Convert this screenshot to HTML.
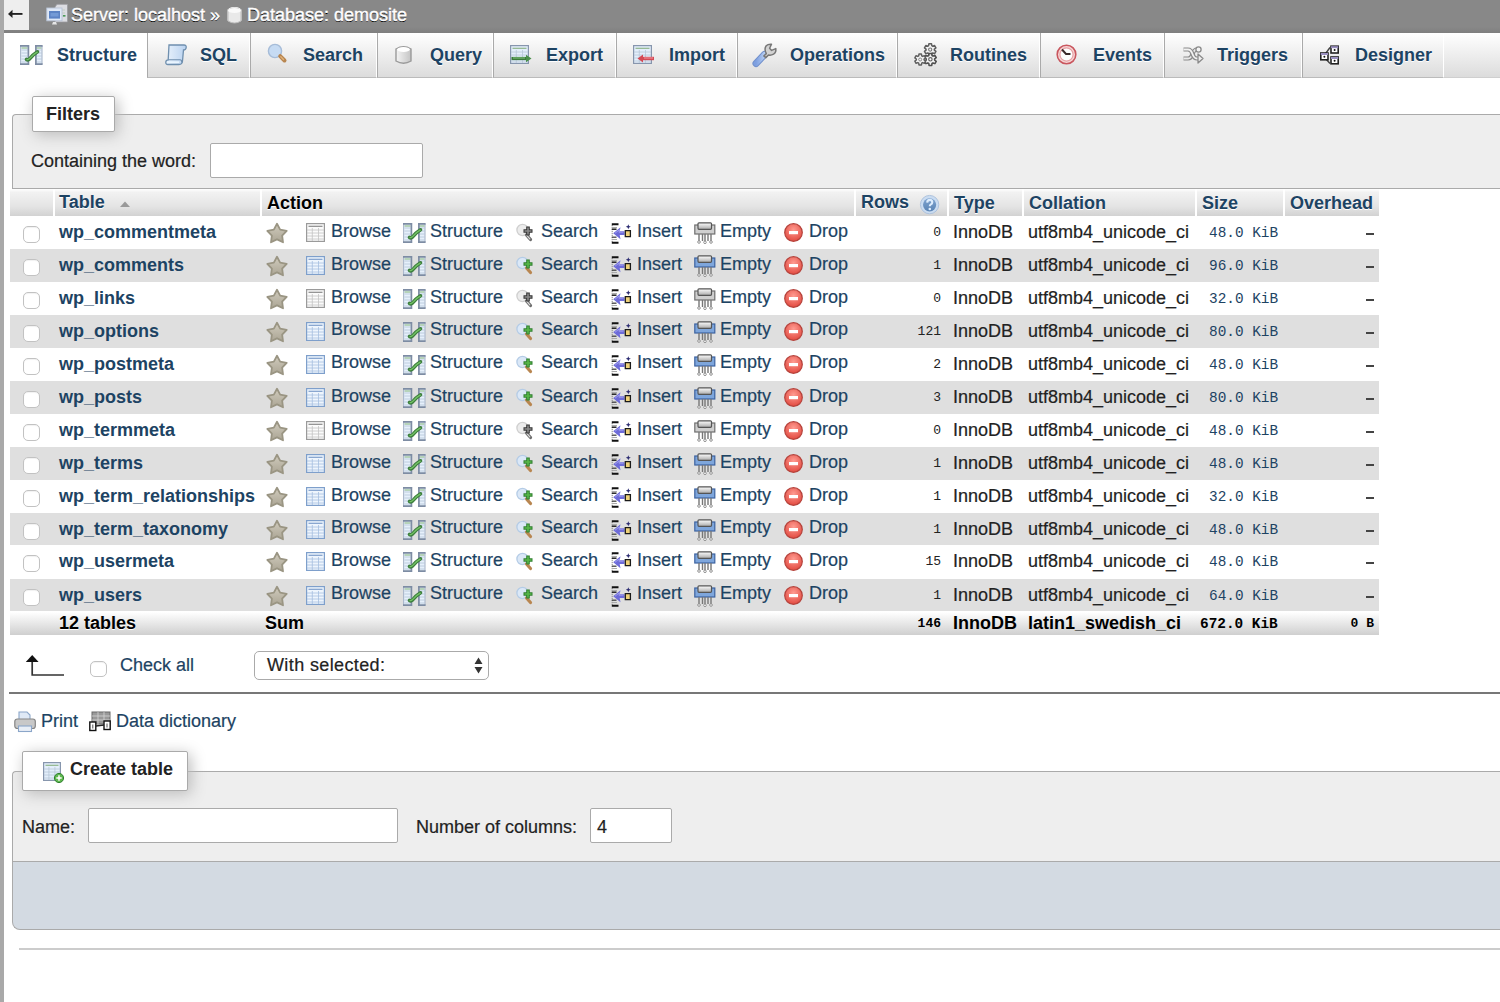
<!DOCTYPE html><html><head><meta charset='utf-8'><style>
*{box-sizing:border-box}
html,body{margin:0;padding:0;width:1500px;height:1002px;overflow:hidden;background:#fff;font-family:"Liberation Sans", sans-serif;font-size:18px;color:#000}
.a{position:absolute}
.t{position:absolute;white-space:nowrap;line-height:20px;height:20px;-webkit-text-stroke:0.2px currentColor}
.lk{color:#1d4363}
.b{font-weight:bold;-webkit-text-stroke:0}
svg{position:absolute;overflow:visible}
.tab{position:absolute;top:33px;height:45px;background:linear-gradient(#fff,#dcdcdc);border-left:1px solid #aaa;border-right:1px solid #fff;border-bottom:1px solid #bbb}
.tab .t{font-weight:bold;-webkit-text-stroke:0;color:#1d4363;text-shadow:0 1px 0 #fff}
.row{position:absolute;left:10px;width:1369px;height:33px}
.even{background:#dfdfdf}
.th{position:absolute;top:189px;height:27px;background:linear-gradient(#fff 0,#f2f2f2 12%,#e4e4e4 65%,#d2d2d2 100%)}
.th .t{font-weight:bold;-webkit-text-stroke:0;text-shadow:0 1px 0 #fff}
.num{font-family:"Liberation Mono", monospace;font-size:13px;-webkit-text-stroke:0}
.sz{font-family:"Liberation Mono", monospace;font-size:14.4px;color:#1d4363;-webkit-text-stroke:0}
.cb{position:absolute;width:17px;height:17px;border:1px solid #c2c2c2;border-radius:5px;background:#fff;box-shadow:inset 0 1px 1px rgba(0,0,0,0.06)}
</style></head><body>
<div class='a' style='left:0;top:0;width:4px;height:1002px;background:#a9a9a9'></div>
<div class='a' style='left:4px;top:0;width:1496px;height:33px;background:linear-gradient(#888 0,#888 27px,#7f7f7f 33px)'></div>
<div class='a' style='left:4px;top:0;width:25px;height:30px;background:#eee'></div>
<svg style='left:7px;top:9px' width='17' height='10' viewBox='0 0 17 10'><path d='M4 4.9 H15.5' stroke='#fff' stroke-width='3.4' opacity='0.6'/><path d='M4.5 4.9 H15.5' stroke='#222' stroke-width='1.9'/><path d='M1 4.9 L5.5 0.8 L5.5 9 Z' fill='#222'/></svg>
<svg style='left:46px;top:4px' width='22' height='22' viewBox='0 0 22 22'>
<path d='M9 3 L11 0.3 H21.5 V18 H9 Z' fill='#dcdde2' stroke='#9a9aa0' stroke-width='0.8'/>
<path d='M12 6h7M12 9h7M12 12h7' stroke='#b9c9b9' stroke-width='0.8'/>
<rect x='17' y='11' width='2.5' height='1.6' fill='#4a9a5a'/>
<rect x='0.8' y='4' width='15.2' height='12.8' fill='#dfe8f6' stroke='#b8c4d6' stroke-width='0.9'/>
<rect x='3' y='7' width='11' height='7.6' fill='#5b83c4'/>
<rect x='4.5' y='9' width='8' height='3.5' fill='#7ea4dd' opacity='0.7'/>
<path d='M6 20.5 L7 18 H10 L11 20.5 Z' fill='#e6e6e6'/>
</svg>
<svg style='left:227px;top:6px' width='15' height='18' viewBox='0 0 15 18'>
<defs><linearGradient id='dbg' x1='0' x2='1'><stop offset='0' stop-color='#f4f4f4'/><stop offset='0.5' stop-color='#dcdcdc'/><stop offset='1' stop-color='#bdbdbd'/></linearGradient></defs>
<path d='M0.5 3.5 Q7.5 -1 14.5 3.5 L14.5 14.5 Q7.5 19 0.5 14.5 Z' fill='#f7f7f7'/>
<path d='M2.5 5 Q7.5 7.5 12.5 5 L12.5 14 Q7.5 16.5 2.5 14 Z' fill='url(#dbg)'/>
<ellipse cx='7.5' cy='3.2' rx='6' ry='2.2' fill='#fff'/>
</svg>
<div class='t' style='left:71px;top:4.5px;color:#fff;text-shadow:0 1px 0 #000;-webkit-text-stroke:0.45px #fff'>Server: localhost &#187;</div>
<svg style='left:227px;top:7px' width='15' height='17' viewBox='0 0 15 17'>
<path d='M1 3 Q7.5 -1 14 3 L14 14 Q7.5 18 1 14 Z' fill='#e9e9e9' stroke='#bbb'/>
<ellipse cx='7.5' cy='3.5' rx='6.5' ry='2.5' fill='#fafafa'/>
</svg>
<div class='t' style='left:247px;top:4.5px;color:#fff;text-shadow:0 1px 0 #000;-webkit-text-stroke:0.45px #fff'>Database: demosite</div>
<div class='a' style='left:4px;top:33px;width:1496px;height:45px;background:linear-gradient(#fff,#dcdcdc);border-bottom:1px solid #cfcfcf'></div>
<div class='a' style='left:4px;top:33px;width:143px;height:45px;background:#fff'></div>
<div class='t b lk' style='left:57px;top:45px;text-shadow:0 1px 0 #fff'>Structure</div>
<svg style='left:20px;top:45px' width='23' height='20' viewBox='0 0 23 20'>
<rect x='0.5' y='0.5' width='8' height='19' fill='#e6f0fb'/>
<rect x='15.5' y='0.5' width='6.5' height='19' fill='#e6f0fb'/>
<path d='M1.5 5h6M1.5 8h6M1.5 11h6M1.5 14h6M1.5 17h6M16.5 5h5M16.5 8h5M16.5 11h5M16.5 14h5M16.5 17h5' stroke='#b9c8da' stroke-width='0.9'/>
<path d='M1.5 3h6M16.5 3h5' stroke='#86b57a' stroke-width='1.1'/>
<path d='M0.6 0.8 V19.2' stroke='#a9b7ca' stroke-width='1.1'/>
<path d='M22 0.8 V19.2' stroke='#a9b7ca' stroke-width='1.1'/>
<path d='M0 0.9 H9.3 M8.4 0.9 V19.2 M0 19.2 H9.3' stroke='#7d8ca3' stroke-width='1.7' fill='none'/>
<path d='M15 0.9 H22.6 M15.9 0.9 V19.2 M15 19.2 H22.6' stroke='#7d8ca3' stroke-width='1.7' fill='none'/>
<path d='M6.5 14.5 Q8 15.5 9.5 14 Q13 9.5 17.5 6.8' stroke='#3d7f3d' stroke-width='3.6' fill='none' stroke-linecap='round'/>
<path d='M7 14.6 Q8 15 9.5 13.6 Q13 9.4 17.2 7.2' stroke='#74c266' stroke-width='1.3' fill='none' stroke-linecap='round'/>
</svg>
<div class='tab' style='left:147px;width:103px'></div>
<div class='t b lk' style='left:200px;top:45px;text-shadow:0 1px 0 #fff'>SQL</div>
<svg style='left:165px;top:44px' width='22' height='22' viewBox='0 0 22 22'>
<defs><linearGradient id='sqlg' x1='0' x2='1'><stop offset='0' stop-color='#e9f2fc'/><stop offset='1' stop-color='#b9d2f0'/></linearGradient></defs>
<path d='M4 1 L19 1 Q21.5 1 21.2 3.5 Q21 6 18.5 6 L17.5 17 Q17.3 20.5 14 20.5 L3 20.5 Q0.5 20.5 0.8 18 Q1 15.8 3.2 15.8 L4 1 Z' fill='url(#sqlg)' stroke='#6f8fae' stroke-width='1.3'/>
<path d='M3.2 15.8 L15 15.8 Q17 16 16.8 18.5' fill='none' stroke='#6f8fae' stroke-width='1.1'/>
<path d='M2.5 18.2 L14 18.2' stroke='#eaf6ff' stroke-width='1.5'/>
</svg>
<div class='tab' style='left:250px;width:127px'></div>
<div class='t b lk' style='left:303px;top:45px;text-shadow:0 1px 0 #fff'>Search</div>
<svg style='left:267px;top:43px' width='20' height='20' viewBox='0 0 20 20'>
<circle cx='8' cy='8' r='6.6' fill='#c6dbf3' stroke='#a6bcd8' stroke-width='1.4'/>
<path d='M13.2 13.2 L17.5 17.5' stroke='#b88650' stroke-width='4' stroke-linecap='round'/>
<path d='M13.8 13.8 L16.5 16.5' stroke='#e0b27a' stroke-width='1.4' stroke-linecap='round'/>
</svg>
<div class='tab' style='left:377px;width:116px'></div>
<div class='t b lk' style='left:430px;top:45px;text-shadow:0 1px 0 #fff'>Query</div>
<svg style='left:395px;top:45px' width='17' height='20' viewBox='0 0 17 20'>
<defs><linearGradient id='qg' x1='0' x2='1'><stop offset='0' stop-color='#f4f4f4'/><stop offset='1' stop-color='#c4c4c4'/></linearGradient></defs>
<path d='M1 4 Q8.5 -0.5 16 4 L16 16 Q8.5 20.5 1 16 Z' fill='url(#qg)' stroke='#9a9a9a' stroke-width='1.4'/>
<ellipse cx='8.5' cy='4.5' rx='6.3' ry='2.4' fill='#fff'/>
</svg>
<div class='tab' style='left:493px;width:123px'></div>
<div class='t b lk' style='left:546px;top:45px;text-shadow:0 1px 0 #fff'>Export</div>
<svg style='left:510px;top:45px' width='22' height='19' viewBox='0 0 22 19'><rect x='0.6' y='0.6' width='17.8' height='17.8' fill='#e3eefb' stroke='#8796ad' stroke-width='1.2'/>
<path d='M2.5 3.3H16.5' stroke='#8fb48a' stroke-width='1.2'/>
<path d='M1 7H18M1 10H18M1 13H18M1 16H18M6.3 5V18M12.5 5V18' stroke='#b7c6d8' stroke-width='0.8'/>
<path d='M1.5 13.5 H17' stroke='#3b7a3b' stroke-width='3.2'/>
<path d='M16 9.8 L21.5 13.5 L16 17.2 Z' fill='#4a8f4a'/>
<path d='M3 13 H15' stroke='#8fcf8a' stroke-width='0.9'/>
</svg>
<div class='tab' style='left:616px;width:121px'></div>
<div class='t b lk' style='left:669px;top:45px;text-shadow:0 1px 0 #fff'>Import</div>
<svg style='left:633px;top:45px' width='22' height='19' viewBox='0 0 22 19'><rect x='0.6' y='0.6' width='17.8' height='17.8' fill='#e3eefb' stroke='#8796ad' stroke-width='1.2'/>
<path d='M2.5 3.3H16.5' stroke='#8fb48a' stroke-width='1.2'/>
<path d='M1 7H18M1 10H18M1 13H18M1 16H18M6.3 5V18M12.5 5V18' stroke='#b7c6d8' stroke-width='0.8'/>
<path d='M9 13.5 H21' stroke='#d44a55' stroke-width='3.4'/>
<path d='M10 9.5 L4.5 13.5 L10 17.5 Z' fill='#d44a55'/>
<path d='M11 13 H20' stroke='#f7a0a8' stroke-width='0.9'/>
</svg>
<div class='tab' style='left:737px;width:160px'></div>
<div class='t b lk' style='left:790px;top:45px;text-shadow:0 1px 0 #fff'>Operations</div>
<svg style='left:750px;top:40px' width='27' height='28' viewBox='0 0 27 28'>
<defs><linearGradient id='wg' x1='0' x2='1' y1='0' y2='0'><stop offset='0' stop-color='#7d9fe0'/><stop offset='1' stop-color='#b4ccf2'/></linearGradient></defs>
<path d='M6 23.5 L14.5 14.5' stroke='#7190cc' stroke-width='7' stroke-linecap='round'/>
<path d='M6 23.5 L14.5 14.5' stroke='url(#wg)' stroke-width='5' stroke-linecap='round'/>
<path d='M13.8 16 L16.3 13.6 Q13.8 9 16.2 5.8 Q18 4 21.5 4.3 L19.6 8.3 L21.6 10.4 L25.8 8.6 Q26.3 12.5 23.5 14.2 Q21 15.6 18.5 15 L15.8 17.6 Z' fill='#d2d2d2' stroke='#777' stroke-width='1.5' stroke-linejoin='round'/>
</svg>
<div class='tab' style='left:897px;width:143px'></div>
<div class='t b lk' style='left:950px;top:45px;text-shadow:0 1px 0 #fff'>Routines</div>
<svg style='left:910px;top:40px' width='30' height='30' viewBox='0 0 30 30'>
<path d='M18.59,5.72 L18.89,3.74 L21.51,3.74 L21.81,5.72 L22.76,6.27 L24.62,5.54 L25.93,7.81 L24.36,9.05 L24.36,10.15 L25.93,11.39 L24.62,13.66 L22.76,12.93 L21.81,13.48 L21.51,15.46 L18.89,15.46 L18.59,13.48 L17.64,12.93 L15.78,13.66 L14.47,11.39 L16.04,10.15 L16.04,9.05 L14.47,7.81 L15.78,5.54 L17.64,6.27 Z' fill='#f3f3f3' stroke='#5f5f5f' stroke-width='1.5' stroke-linejoin='round'/>
<circle cx='20.2' cy='9.6' r='1.6' fill='none' stroke='#777' stroke-width='1.1'/>
<path d='M18.77,15.56 L19.07,13.55 L21.73,13.55 L22.03,15.56 L23.00,16.11 L24.89,15.37 L26.22,17.68 L24.63,18.94 L24.63,20.06 L26.22,21.32 L24.89,23.63 L23.00,22.89 L22.03,23.44 L21.73,25.45 L19.07,25.45 L18.77,23.44 L17.80,22.89 L15.91,23.63 L14.58,21.32 L16.17,20.06 L16.17,18.94 L14.58,17.68 L15.91,15.37 L17.80,16.11 Z' fill='#f3f3f3' stroke='#4f4f4f' stroke-width='1.6' stroke-linejoin='round'/>
<circle cx='20.4' cy='19.3' r='1.7' fill='#fff' stroke='#666' stroke-width='1.2'/>
<path d='M8.70,15.88 L8.98,14.03 L11.42,14.03 L11.70,15.88 L12.59,16.39 L14.32,15.71 L15.54,17.83 L14.09,18.99 L14.09,20.01 L15.54,21.17 L14.32,23.29 L12.59,22.61 L11.70,23.12 L11.42,24.97 L8.98,24.97 L8.70,23.12 L7.81,22.61 L6.08,23.29 L4.86,21.17 L6.31,20.01 L6.31,18.99 L4.86,17.83 L6.08,15.71 L7.81,16.39 Z' fill='#f3f3f3' stroke='#5f5f5f' stroke-width='1.5' stroke-linejoin='round'/>
<circle cx='10.2' cy='19.5' r='1.5' fill='none' stroke='#888' stroke-width='1'/>
</svg>
<div class='tab' style='left:1040px;width:124px'></div>
<div class='t b lk' style='left:1093px;top:45px;text-shadow:0 1px 0 #fff'>Events</div>
<svg style='left:1056px;top:44px' width='21' height='21' viewBox='0 0 21 21'>
<circle cx='10.5' cy='10.5' r='9.3' fill='#f6d6d6' stroke='#c9565e' stroke-width='1.6'/>
<circle cx='10.5' cy='10.5' r='6.6' fill='#fdfdfd' stroke='#e6a0a4' stroke-width='1.2'/>
<path d='M6 5.5 L10 10 L14.5 10' stroke='#3a2a2a' stroke-width='1.9' fill='none'/>
</svg>
<div class='tab' style='left:1164px;width:138px'></div>
<div class='t b lk' style='left:1217px;top:45px;text-shadow:0 1px 0 #fff'>Triggers</div>
<svg style='left:1178px;top:40px' width='30' height='30' viewBox='0 0 30 30'>
<path d='M5.5 18.5 H10 Q13 18.5 14.5 14 Q16 9.5 19 9.5' stroke='#8a8a8a' stroke-width='4.2' fill='none'/>
<path d='M5.5 18.5 H10 Q13 18.5 14.5 14 Q16 9.5 19 9.5' stroke='#e9e9e9' stroke-width='1.8' fill='none'/>
<path d='M5.5 9.5 H10 Q13 9.5 14.5 14 Q16 18.5 19 18.5 H21' stroke='#8a8a8a' stroke-width='4.2' fill='none'/>
<path d='M5.5 9.5 H10 Q13 9.5 14.5 14 Q16 18.5 19 18.5 H21' stroke='#f2f2f2' stroke-width='1.8' fill='none'/>
<path d='M20 14 L25 18.5 L20 23 Z' fill='#eee' stroke='#8a8a8a' stroke-width='1.3' stroke-linejoin='round'/>
<circle cx='20.5' cy='9.5' r='2.6' fill='#f4f4f4' stroke='#8a8a8a' stroke-width='1.3'/>
</svg>
<div class='tab' style='left:1302px;width:142px'></div>
<div class='t b lk' style='left:1355px;top:45px;text-shadow:0 1px 0 #fff'>Designer</div>
<svg style='left:1320px;top:45px' width='19' height='20' viewBox='0 0 19 20'>
<path d='M4.5 10 L10 2.5 M5 13 L10 18.5' stroke='#444' stroke-width='1.4' fill='none'/>
<rect x='0.8' y='8' width='7.2' height='6.8' fill='#fff' stroke='#222' stroke-width='1.6'/>
<rect x='0.8' y='8' width='7.2' height='2' fill='#9a90c0'/>
<circle cx='4.4' cy='11.8' r='1' fill='#111'/>
<rect x='11' y='1.2' width='7.2' height='6.8' fill='#fff' stroke='#222' stroke-width='1.6'/>
<rect x='11' y='1.2' width='7.2' height='2' fill='#9a90c0'/>
<circle cx='14.6' cy='5' r='1' fill='#111'/>
<rect x='11' y='12' width='7.2' height='6.8' fill='#fff' stroke='#222' stroke-width='1.6'/>
<rect x='11' y='12' width='7.2' height='2' fill='#9a90c0'/>
<circle cx='14.6' cy='15.8' r='1' fill='#111'/>
</svg>
<div class='a' style='left:12px;top:114px;width:1500px;height:75px;background:#eee;border:1px solid #aaa;border-right:none;border-radius:4px 0 0 0'></div>
<div class='a' style='left:32px;top:96px;width:83px;height:36px;background:#fff;border:1px solid #aaa;border-radius:2px;box-shadow:3px 3px 15px #bbb'></div>
<div class='t b' style='left:46px;top:104px;color:#222'>Filters</div>
<div class='t' style='left:31px;top:151px;color:#222'>Containing the word:</div>
<div class='a' style='left:210px;top:143px;width:213px;height:35px;background:#fff;border:1px solid #aaa;border-radius:2px'></div>
<div class='th' style='left:10px;width:43px'></div>
<div class='th' style='left:55px;width:205px'></div>
<div class='th' style='left:262px;width:592px'></div>
<div class='th' style='left:856px;width:91px'></div>
<div class='th' style='left:949px;width:73px'></div>
<div class='th' style='left:1024px;width:171px'></div>
<div class='th' style='left:1197px;width:86px'></div>
<div class='th' style='left:1285px;width:94px'></div>
<div class='t b lk' style='left:59px;top:192px;text-shadow:0 1px 0 #fff'>Table</div>
<svg style='left:119px;top:200px' width='12' height='8'><path d='M1 7 L6 1.5 L11 7 Z' fill='#999'/></svg>
<div class='t b' style='left:267px;top:193px;text-shadow:0 1px 0 #fff'>Action</div>
<div class='t b lk' style='left:861px;top:192px;text-shadow:0 1px 0 #fff'>Rows</div>
<svg style='left:920px;top:195px' width='20' height='20' viewBox='0 0 20 20'>
<defs><linearGradient id='hg' x1='0' y1='0' x2='0' y2='1'><stop offset='0' stop-color='#7ea3cf'/><stop offset='1' stop-color='#5a84b5'/></linearGradient></defs>
<circle cx='9.6' cy='9.6' r='9.2' fill='#cadcf1' stroke='#a9bfdb' stroke-width='0.9'/>
<circle cx='9.6' cy='9.8' r='6.6' fill='url(#hg)'/>
<path d='M7.2 7.6 Q7.3 4.9 9.8 4.9 Q12.3 5 12.3 7.3 Q12.3 8.8 10.6 9.6 Q9.8 10 9.8 11.3' stroke='#dcecfd' stroke-width='2.1' fill='none'/>
<circle cx='9.8' cy='14' r='1.3' fill='#dcecfd'/>
</svg>
<div class='t b lk' style='left:954px;top:193px;text-shadow:0 1px 0 #fff'>Type</div>
<div class='t b lk' style='left:1029px;top:193px;text-shadow:0 1px 0 #fff'>Collation</div>
<div class='t b lk' style='left:1202px;top:193px;text-shadow:0 1px 0 #fff'>Size</div>
<div class='t b lk' style='left:1290px;top:193px;text-shadow:0 1px 0 #fff'>Overhead</div>
<div class='row' style='top:216.00px;height:33.30px'></div>
<div class='cb' style='left:23px;top:226.00px'></div>
<div class='t b lk' style='left:59px;top:222.00px'>wp_commentmeta</div>
<svg style='left:266px;top:222px' width='22' height='22' viewBox='0 0 22 22'>
<defs><linearGradient id='stg' x1='0' y1='0' x2='0' y2='1'><stop offset='0' stop-color='#d0cbbd'/><stop offset='1' stop-color='#aba594'/></linearGradient></defs>
<path d='M11.00,1.80 L14.17,7.63 L20.70,8.85 L16.14,13.67 L17.00,20.25 L11.00,17.40 L5.00,20.25 L5.86,13.67 L1.30,8.85 L7.83,7.63 Z' fill='url(#stg)' stroke='#9a9583' stroke-width='1.8' stroke-linejoin='round'/>
</svg><svg style='left:306px;top:223px' width='19' height='19' viewBox='0 0 19 19'><rect x='0.6' y='0.6' width='17.8' height='17.8' fill='#fbfbfb' stroke='#9a9a9a' stroke-width='1.2'/>
<path d='M2.5 3.3H16.5' stroke='#8a8a8a' stroke-width='1.2'/>
<path d='M1 7H18M1 10H18M1 13H18M1 16H18M6.3 5V18M12.5 5V18' stroke='#c4c4c4' stroke-width='0.8'/></svg><svg style='left:403px;top:223px' width='23' height='20' viewBox='0 0 23 20'>
<rect x='0.5' y='0.5' width='8' height='19' fill='#e6f0fb'/>
<rect x='15.5' y='0.5' width='6.5' height='19' fill='#e6f0fb'/>
<path d='M1.5 5h6M1.5 8h6M1.5 11h6M1.5 14h6M1.5 17h6M16.5 5h5M16.5 8h5M16.5 11h5M16.5 14h5M16.5 17h5' stroke='#b9c8da' stroke-width='0.9'/>
<path d='M1.5 3h6M16.5 3h5' stroke='#86b57a' stroke-width='1.1'/>
<path d='M0.6 0.8 V19.2' stroke='#a9b7ca' stroke-width='1.1'/>
<path d='M22 0.8 V19.2' stroke='#a9b7ca' stroke-width='1.1'/>
<path d='M0 0.9 H9.3 M8.4 0.9 V19.2 M0 19.2 H9.3' stroke='#7d8ca3' stroke-width='1.7' fill='none'/>
<path d='M15 0.9 H22.6 M15.9 0.9 V19.2 M15 19.2 H22.6' stroke='#7d8ca3' stroke-width='1.7' fill='none'/>
<path d='M6.5 14.5 Q8 15.5 9.5 14 Q13 9.5 17.5 6.8' stroke='#3d7f3d' stroke-width='3.6' fill='none' stroke-linecap='round'/>
<path d='M7 14.6 Q8 15 9.5 13.6 Q13 9.4 17.2 7.2' stroke='#74c266' stroke-width='1.3' fill='none' stroke-linecap='round'/>
</svg><svg style='left:516px;top:223px' width='18' height='18' viewBox='0 0 18 18'>
<circle cx='6.5' cy='7' r='5.6' fill='#ececec' stroke='#cfcfcf' stroke-width='1.3'/>
<path d='M10.5 12 L14.5 16.5' stroke='#6a6a6a' stroke-width='3.2' stroke-linecap='round'/>
<path d='M10.8 12.3 L13.8 15.8' stroke='#ddd' stroke-width='1.2' stroke-linecap='round'/>
<path d='M12 3.5 V12.5 M7.5 8 H16.5' stroke='#333' stroke-width='3.6'/>
<path d='M12 4.5 V11.5 M8.5 8 H15.5' stroke='#8a8a8a' stroke-width='1.6'/>
</svg><svg style='left:611px;top:223px' width='20' height='21' viewBox='0 0 20 21'>
<path d='M1.2 2 V19' stroke='#888' stroke-width='1' stroke-dasharray='1.2 0.8'/>
<path d='M0.8 1.2 H7.5 M0.8 19.8 H7.5' stroke='#111' stroke-width='2'/>
<path d='M1.8 4.5 H6 M1.8 16.5 H6' stroke='#aaa' stroke-width='1.1'/>
<path d='M0.8 6.2 H5.5' stroke='#222' stroke-width='1.5'/>
<path d='M0.8 14.2 H5.5' stroke='#444' stroke-width='1.3'/>
<path d='M2.2 10.2 L9.5 4.2 L8.7 8.3 L13.5 8.3 L13.5 12.1 L8.7 12.1 L9.5 16.2 Z' fill='#6d6bd9'/>
<path d='M4 10.2 L8.5 6.8 L8 9.2 L12.5 9.2' stroke='#a9a8f0' stroke-width='0.8' fill='none'/>
<path d='M14.3 7.6 H19.4 V13.6 H14.3 Z' fill='#efd27a' stroke='#1a1a1a' stroke-width='1.3'/>
<path d='M17.3 1.2 L18 3 L19.8 3.7 L18 4.4 L17.3 6.2 L16.6 4.4 L14.8 3.7 L16.6 3 Z' fill='#2a2a70'/>
</svg><svg style='left:694px;top:222px' width='22' height='22' viewBox='0 0 22 22'>
<defs><linearGradient id='emg0' x1='0' y1='0' x2='0' y2='1'><stop offset='0' stop-color='#fff'/><stop offset='1' stop-color='#aaa'/></linearGradient></defs>
<rect x='0.8' y='3' width='20' height='9' fill='#cfcfcf' stroke='#6f6f6f' stroke-width='1.2'/>
<rect x='4' y='0.8' width='13.5' height='6.5' rx='1' fill='url(#emg0)' stroke='#555' stroke-width='1.2'/>
<path d='M5 12 V20 M8.5 12 V19 M11 12 V20 M14 12 V19 M17 12 V20' stroke='#777' stroke-width='1.4'/>
<circle cx='5' cy='20' r='1.3' fill='#fff' stroke='#888' stroke-width='0.9'/>
<circle cx='11' cy='20.3' r='1.3' fill='#fff' stroke='#888' stroke-width='0.9'/>
<circle cx='17' cy='20' r='1.3' fill='#fff' stroke='#888' stroke-width='0.9'/>
</svg><svg style='left:784px;top:223px' width='19' height='19' viewBox='0 0 19 19'>
<defs><radialGradient id='drg' cx='0.5' cy='0.35' r='0.7'><stop offset='0' stop-color='#ff9c92'/><stop offset='1' stop-color='#e0443a'/></radialGradient></defs>
<circle cx='9.5' cy='9.5' r='8.8' fill='url(#drg)' stroke='#b5433c' stroke-width='1.2'/>
<rect x='5' y='8' width='9' height='3.2' fill='#fff'/>
</svg>
<div class='t lk' style='left:331px;top:220.60px'>Browse</div>
<div class='t lk' style='left:430px;top:220.60px'>Structure</div>
<div class='t lk' style='left:541px;top:220.60px'>Search</div>
<div class='t lk' style='left:637px;top:220.60px'>Insert</div>
<div class='t lk' style='left:720px;top:220.60px'>Empty</div>
<div class='t lk' style='left:809px;top:220.60px'>Drop</div>
<div class='t num' style='left:856px;width:85px;text-align:right;top:223.00px;color:#222'>0</div>
<div class='t' style='left:953px;top:222.00px;color:#222'>InnoDB</div>
<div class='t' style='left:1028px;top:222.00px;color:#222'>utf8mb4_unicode_ci</div>
<div class='t sz' style='left:1209px;top:223.00px'>48.0 KiB</div>
<div class='a' style='left:1366px;top:233px;width:8px;height:2px;background:#444'></div>
<div class='row even' style='top:249.30px;height:32.70px'></div>
<div class='cb' style='left:23px;top:259.30px'></div>
<div class='t b lk' style='left:59px;top:255.30px'>wp_comments</div>
<svg style='left:266px;top:255px' width='22' height='22' viewBox='0 0 22 22'>
<defs><linearGradient id='stg' x1='0' y1='0' x2='0' y2='1'><stop offset='0' stop-color='#d0cbbd'/><stop offset='1' stop-color='#aba594'/></linearGradient></defs>
<path d='M11.00,1.80 L14.17,7.63 L20.70,8.85 L16.14,13.67 L17.00,20.25 L11.00,17.40 L5.00,20.25 L5.86,13.67 L1.30,8.85 L7.83,7.63 Z' fill='url(#stg)' stroke='#9a9583' stroke-width='1.8' stroke-linejoin='round'/>
</svg><svg style='left:306px;top:256px' width='19' height='19' viewBox='0 0 19 19'><rect x='0.6' y='0.6' width='17.8' height='17.8' fill='#eef5fd' stroke='#7e9fcb' stroke-width='1.2'/>
<path d='M2.5 3.3H16.5' stroke='#7e9fcb' stroke-width='1.2'/>
<path d='M1 7H18M1 10H18M1 13H18M1 16H18M6.3 5V18M12.5 5V18' stroke='#a6bfdf' stroke-width='0.8'/></svg><svg style='left:403px;top:256px' width='23' height='20' viewBox='0 0 23 20'>
<rect x='0.5' y='0.5' width='8' height='19' fill='#e6f0fb'/>
<rect x='15.5' y='0.5' width='6.5' height='19' fill='#e6f0fb'/>
<path d='M1.5 5h6M1.5 8h6M1.5 11h6M1.5 14h6M1.5 17h6M16.5 5h5M16.5 8h5M16.5 11h5M16.5 14h5M16.5 17h5' stroke='#b9c8da' stroke-width='0.9'/>
<path d='M1.5 3h6M16.5 3h5' stroke='#86b57a' stroke-width='1.1'/>
<path d='M0.6 0.8 V19.2' stroke='#a9b7ca' stroke-width='1.1'/>
<path d='M22 0.8 V19.2' stroke='#a9b7ca' stroke-width='1.1'/>
<path d='M0 0.9 H9.3 M8.4 0.9 V19.2 M0 19.2 H9.3' stroke='#7d8ca3' stroke-width='1.7' fill='none'/>
<path d='M15 0.9 H22.6 M15.9 0.9 V19.2 M15 19.2 H22.6' stroke='#7d8ca3' stroke-width='1.7' fill='none'/>
<path d='M6.5 14.5 Q8 15.5 9.5 14 Q13 9.5 17.5 6.8' stroke='#3d7f3d' stroke-width='3.6' fill='none' stroke-linecap='round'/>
<path d='M7 14.6 Q8 15 9.5 13.6 Q13 9.4 17.2 7.2' stroke='#74c266' stroke-width='1.3' fill='none' stroke-linecap='round'/>
</svg><svg style='left:516px;top:256px' width='18' height='18' viewBox='0 0 18 18'>
<circle cx='6.5' cy='7' r='5.6' fill='#dbe8f7' stroke='#b5cce6' stroke-width='1.3'/>
<path d='M10.5 12 L14.5 16.5' stroke='#b88650' stroke-width='3.2' stroke-linecap='round'/>
<path d='M12 3.5 V12.5 M7.5 8 H16.5' stroke='#2f7f2f' stroke-width='3.6'/>
<path d='M12 4.5 V11.5 M8.5 8 H15.5' stroke='#58b84a' stroke-width='1.6'/>
</svg><svg style='left:611px;top:256px' width='20' height='21' viewBox='0 0 20 21'>
<path d='M1.2 2 V19' stroke='#888' stroke-width='1' stroke-dasharray='1.2 0.8'/>
<path d='M0.8 1.2 H7.5 M0.8 19.8 H7.5' stroke='#111' stroke-width='2'/>
<path d='M1.8 4.5 H6 M1.8 16.5 H6' stroke='#aaa' stroke-width='1.1'/>
<path d='M0.8 6.2 H5.5' stroke='#222' stroke-width='1.5'/>
<path d='M0.8 14.2 H5.5' stroke='#444' stroke-width='1.3'/>
<path d='M2.2 10.2 L9.5 4.2 L8.7 8.3 L13.5 8.3 L13.5 12.1 L8.7 12.1 L9.5 16.2 Z' fill='#6d6bd9'/>
<path d='M4 10.2 L8.5 6.8 L8 9.2 L12.5 9.2' stroke='#a9a8f0' stroke-width='0.8' fill='none'/>
<path d='M14.3 7.6 H19.4 V13.6 H14.3 Z' fill='#efd27a' stroke='#1a1a1a' stroke-width='1.3'/>
<path d='M17.3 1.2 L18 3 L19.8 3.7 L18 4.4 L17.3 6.2 L16.6 4.4 L14.8 3.7 L16.6 3 Z' fill='#2a2a70'/>
</svg><svg style='left:694px;top:255px' width='22' height='22' viewBox='0 0 22 22'>
<defs><linearGradient id='emg1' x1='0' y1='0' x2='0' y2='1'><stop offset='0' stop-color='#fff'/><stop offset='1' stop-color='#aaa'/></linearGradient></defs>
<rect x='0.8' y='3' width='20' height='9' fill='#7ea6dc' stroke='#3d63a0' stroke-width='1.2'/>
<rect x='4' y='0.8' width='13.5' height='6.5' rx='1' fill='url(#emg1)' stroke='#555' stroke-width='1.2'/>
<path d='M5 12 V20 M8.5 12 V19 M11 12 V20 M14 12 V19 M17 12 V20' stroke='#777' stroke-width='1.4'/>
<circle cx='5' cy='20' r='1.3' fill='#fff' stroke='#888' stroke-width='0.9'/>
<circle cx='11' cy='20.3' r='1.3' fill='#fff' stroke='#888' stroke-width='0.9'/>
<circle cx='17' cy='20' r='1.3' fill='#fff' stroke='#888' stroke-width='0.9'/>
</svg><svg style='left:784px;top:256px' width='19' height='19' viewBox='0 0 19 19'>
<defs><radialGradient id='drg' cx='0.5' cy='0.35' r='0.7'><stop offset='0' stop-color='#ff9c92'/><stop offset='1' stop-color='#e0443a'/></radialGradient></defs>
<circle cx='9.5' cy='9.5' r='8.8' fill='url(#drg)' stroke='#b5433c' stroke-width='1.2'/>
<rect x='5' y='8' width='9' height='3.2' fill='#fff'/>
</svg>
<div class='t lk' style='left:331px;top:253.90px'>Browse</div>
<div class='t lk' style='left:430px;top:253.90px'>Structure</div>
<div class='t lk' style='left:541px;top:253.90px'>Search</div>
<div class='t lk' style='left:637px;top:253.90px'>Insert</div>
<div class='t lk' style='left:720px;top:253.90px'>Empty</div>
<div class='t lk' style='left:809px;top:253.90px'>Drop</div>
<div class='t num' style='left:856px;width:85px;text-align:right;top:256.30px;color:#222'>1</div>
<div class='t' style='left:953px;top:255.30px;color:#222'>InnoDB</div>
<div class='t' style='left:1028px;top:255.30px;color:#222'>utf8mb4_unicode_ci</div>
<div class='t sz' style='left:1209px;top:256.30px'>96.0 KiB</div>
<div class='a' style='left:1366px;top:266px;width:8px;height:2px;background:#444'></div>
<div class='row' style='top:282.00px;height:32.80px'></div>
<div class='cb' style='left:23px;top:292.00px'></div>
<div class='t b lk' style='left:59px;top:288.00px'>wp_links</div>
<svg style='left:266px;top:288px' width='22' height='22' viewBox='0 0 22 22'>
<defs><linearGradient id='stg' x1='0' y1='0' x2='0' y2='1'><stop offset='0' stop-color='#d0cbbd'/><stop offset='1' stop-color='#aba594'/></linearGradient></defs>
<path d='M11.00,1.80 L14.17,7.63 L20.70,8.85 L16.14,13.67 L17.00,20.25 L11.00,17.40 L5.00,20.25 L5.86,13.67 L1.30,8.85 L7.83,7.63 Z' fill='url(#stg)' stroke='#9a9583' stroke-width='1.8' stroke-linejoin='round'/>
</svg><svg style='left:306px;top:289px' width='19' height='19' viewBox='0 0 19 19'><rect x='0.6' y='0.6' width='17.8' height='17.8' fill='#fbfbfb' stroke='#9a9a9a' stroke-width='1.2'/>
<path d='M2.5 3.3H16.5' stroke='#8a8a8a' stroke-width='1.2'/>
<path d='M1 7H18M1 10H18M1 13H18M1 16H18M6.3 5V18M12.5 5V18' stroke='#c4c4c4' stroke-width='0.8'/></svg><svg style='left:403px;top:289px' width='23' height='20' viewBox='0 0 23 20'>
<rect x='0.5' y='0.5' width='8' height='19' fill='#e6f0fb'/>
<rect x='15.5' y='0.5' width='6.5' height='19' fill='#e6f0fb'/>
<path d='M1.5 5h6M1.5 8h6M1.5 11h6M1.5 14h6M1.5 17h6M16.5 5h5M16.5 8h5M16.5 11h5M16.5 14h5M16.5 17h5' stroke='#b9c8da' stroke-width='0.9'/>
<path d='M1.5 3h6M16.5 3h5' stroke='#86b57a' stroke-width='1.1'/>
<path d='M0.6 0.8 V19.2' stroke='#a9b7ca' stroke-width='1.1'/>
<path d='M22 0.8 V19.2' stroke='#a9b7ca' stroke-width='1.1'/>
<path d='M0 0.9 H9.3 M8.4 0.9 V19.2 M0 19.2 H9.3' stroke='#7d8ca3' stroke-width='1.7' fill='none'/>
<path d='M15 0.9 H22.6 M15.9 0.9 V19.2 M15 19.2 H22.6' stroke='#7d8ca3' stroke-width='1.7' fill='none'/>
<path d='M6.5 14.5 Q8 15.5 9.5 14 Q13 9.5 17.5 6.8' stroke='#3d7f3d' stroke-width='3.6' fill='none' stroke-linecap='round'/>
<path d='M7 14.6 Q8 15 9.5 13.6 Q13 9.4 17.2 7.2' stroke='#74c266' stroke-width='1.3' fill='none' stroke-linecap='round'/>
</svg><svg style='left:516px;top:289px' width='18' height='18' viewBox='0 0 18 18'>
<circle cx='6.5' cy='7' r='5.6' fill='#ececec' stroke='#cfcfcf' stroke-width='1.3'/>
<path d='M10.5 12 L14.5 16.5' stroke='#6a6a6a' stroke-width='3.2' stroke-linecap='round'/>
<path d='M10.8 12.3 L13.8 15.8' stroke='#ddd' stroke-width='1.2' stroke-linecap='round'/>
<path d='M12 3.5 V12.5 M7.5 8 H16.5' stroke='#333' stroke-width='3.6'/>
<path d='M12 4.5 V11.5 M8.5 8 H15.5' stroke='#8a8a8a' stroke-width='1.6'/>
</svg><svg style='left:611px;top:289px' width='20' height='21' viewBox='0 0 20 21'>
<path d='M1.2 2 V19' stroke='#888' stroke-width='1' stroke-dasharray='1.2 0.8'/>
<path d='M0.8 1.2 H7.5 M0.8 19.8 H7.5' stroke='#111' stroke-width='2'/>
<path d='M1.8 4.5 H6 M1.8 16.5 H6' stroke='#aaa' stroke-width='1.1'/>
<path d='M0.8 6.2 H5.5' stroke='#222' stroke-width='1.5'/>
<path d='M0.8 14.2 H5.5' stroke='#444' stroke-width='1.3'/>
<path d='M2.2 10.2 L9.5 4.2 L8.7 8.3 L13.5 8.3 L13.5 12.1 L8.7 12.1 L9.5 16.2 Z' fill='#6d6bd9'/>
<path d='M4 10.2 L8.5 6.8 L8 9.2 L12.5 9.2' stroke='#a9a8f0' stroke-width='0.8' fill='none'/>
<path d='M14.3 7.6 H19.4 V13.6 H14.3 Z' fill='#efd27a' stroke='#1a1a1a' stroke-width='1.3'/>
<path d='M17.3 1.2 L18 3 L19.8 3.7 L18 4.4 L17.3 6.2 L16.6 4.4 L14.8 3.7 L16.6 3 Z' fill='#2a2a70'/>
</svg><svg style='left:694px;top:288px' width='22' height='22' viewBox='0 0 22 22'>
<defs><linearGradient id='emg0' x1='0' y1='0' x2='0' y2='1'><stop offset='0' stop-color='#fff'/><stop offset='1' stop-color='#aaa'/></linearGradient></defs>
<rect x='0.8' y='3' width='20' height='9' fill='#cfcfcf' stroke='#6f6f6f' stroke-width='1.2'/>
<rect x='4' y='0.8' width='13.5' height='6.5' rx='1' fill='url(#emg0)' stroke='#555' stroke-width='1.2'/>
<path d='M5 12 V20 M8.5 12 V19 M11 12 V20 M14 12 V19 M17 12 V20' stroke='#777' stroke-width='1.4'/>
<circle cx='5' cy='20' r='1.3' fill='#fff' stroke='#888' stroke-width='0.9'/>
<circle cx='11' cy='20.3' r='1.3' fill='#fff' stroke='#888' stroke-width='0.9'/>
<circle cx='17' cy='20' r='1.3' fill='#fff' stroke='#888' stroke-width='0.9'/>
</svg><svg style='left:784px;top:289px' width='19' height='19' viewBox='0 0 19 19'>
<defs><radialGradient id='drg' cx='0.5' cy='0.35' r='0.7'><stop offset='0' stop-color='#ff9c92'/><stop offset='1' stop-color='#e0443a'/></radialGradient></defs>
<circle cx='9.5' cy='9.5' r='8.8' fill='url(#drg)' stroke='#b5433c' stroke-width='1.2'/>
<rect x='5' y='8' width='9' height='3.2' fill='#fff'/>
</svg>
<div class='t lk' style='left:331px;top:286.60px'>Browse</div>
<div class='t lk' style='left:430px;top:286.60px'>Structure</div>
<div class='t lk' style='left:541px;top:286.60px'>Search</div>
<div class='t lk' style='left:637px;top:286.60px'>Insert</div>
<div class='t lk' style='left:720px;top:286.60px'>Empty</div>
<div class='t lk' style='left:809px;top:286.60px'>Drop</div>
<div class='t num' style='left:856px;width:85px;text-align:right;top:289.00px;color:#222'>0</div>
<div class='t' style='left:953px;top:288.00px;color:#222'>InnoDB</div>
<div class='t' style='left:1028px;top:288.00px;color:#222'>utf8mb4_unicode_ci</div>
<div class='t sz' style='left:1209px;top:289.00px'>32.0 KiB</div>
<div class='a' style='left:1366px;top:299px;width:8px;height:2px;background:#444'></div>
<div class='row even' style='top:314.80px;height:33.00px'></div>
<div class='cb' style='left:23px;top:324.80px'></div>
<div class='t b lk' style='left:59px;top:320.80px'>wp_options</div>
<svg style='left:266px;top:321px' width='22' height='22' viewBox='0 0 22 22'>
<defs><linearGradient id='stg' x1='0' y1='0' x2='0' y2='1'><stop offset='0' stop-color='#d0cbbd'/><stop offset='1' stop-color='#aba594'/></linearGradient></defs>
<path d='M11.00,1.80 L14.17,7.63 L20.70,8.85 L16.14,13.67 L17.00,20.25 L11.00,17.40 L5.00,20.25 L5.86,13.67 L1.30,8.85 L7.83,7.63 Z' fill='url(#stg)' stroke='#9a9583' stroke-width='1.8' stroke-linejoin='round'/>
</svg><svg style='left:306px;top:322px' width='19' height='19' viewBox='0 0 19 19'><rect x='0.6' y='0.6' width='17.8' height='17.8' fill='#eef5fd' stroke='#7e9fcb' stroke-width='1.2'/>
<path d='M2.5 3.3H16.5' stroke='#7e9fcb' stroke-width='1.2'/>
<path d='M1 7H18M1 10H18M1 13H18M1 16H18M6.3 5V18M12.5 5V18' stroke='#a6bfdf' stroke-width='0.8'/></svg><svg style='left:403px;top:322px' width='23' height='20' viewBox='0 0 23 20'>
<rect x='0.5' y='0.5' width='8' height='19' fill='#e6f0fb'/>
<rect x='15.5' y='0.5' width='6.5' height='19' fill='#e6f0fb'/>
<path d='M1.5 5h6M1.5 8h6M1.5 11h6M1.5 14h6M1.5 17h6M16.5 5h5M16.5 8h5M16.5 11h5M16.5 14h5M16.5 17h5' stroke='#b9c8da' stroke-width='0.9'/>
<path d='M1.5 3h6M16.5 3h5' stroke='#86b57a' stroke-width='1.1'/>
<path d='M0.6 0.8 V19.2' stroke='#a9b7ca' stroke-width='1.1'/>
<path d='M22 0.8 V19.2' stroke='#a9b7ca' stroke-width='1.1'/>
<path d='M0 0.9 H9.3 M8.4 0.9 V19.2 M0 19.2 H9.3' stroke='#7d8ca3' stroke-width='1.7' fill='none'/>
<path d='M15 0.9 H22.6 M15.9 0.9 V19.2 M15 19.2 H22.6' stroke='#7d8ca3' stroke-width='1.7' fill='none'/>
<path d='M6.5 14.5 Q8 15.5 9.5 14 Q13 9.5 17.5 6.8' stroke='#3d7f3d' stroke-width='3.6' fill='none' stroke-linecap='round'/>
<path d='M7 14.6 Q8 15 9.5 13.6 Q13 9.4 17.2 7.2' stroke='#74c266' stroke-width='1.3' fill='none' stroke-linecap='round'/>
</svg><svg style='left:516px;top:322px' width='18' height='18' viewBox='0 0 18 18'>
<circle cx='6.5' cy='7' r='5.6' fill='#dbe8f7' stroke='#b5cce6' stroke-width='1.3'/>
<path d='M10.5 12 L14.5 16.5' stroke='#b88650' stroke-width='3.2' stroke-linecap='round'/>
<path d='M12 3.5 V12.5 M7.5 8 H16.5' stroke='#2f7f2f' stroke-width='3.6'/>
<path d='M12 4.5 V11.5 M8.5 8 H15.5' stroke='#58b84a' stroke-width='1.6'/>
</svg><svg style='left:611px;top:322px' width='20' height='21' viewBox='0 0 20 21'>
<path d='M1.2 2 V19' stroke='#888' stroke-width='1' stroke-dasharray='1.2 0.8'/>
<path d='M0.8 1.2 H7.5 M0.8 19.8 H7.5' stroke='#111' stroke-width='2'/>
<path d='M1.8 4.5 H6 M1.8 16.5 H6' stroke='#aaa' stroke-width='1.1'/>
<path d='M0.8 6.2 H5.5' stroke='#222' stroke-width='1.5'/>
<path d='M0.8 14.2 H5.5' stroke='#444' stroke-width='1.3'/>
<path d='M2.2 10.2 L9.5 4.2 L8.7 8.3 L13.5 8.3 L13.5 12.1 L8.7 12.1 L9.5 16.2 Z' fill='#6d6bd9'/>
<path d='M4 10.2 L8.5 6.8 L8 9.2 L12.5 9.2' stroke='#a9a8f0' stroke-width='0.8' fill='none'/>
<path d='M14.3 7.6 H19.4 V13.6 H14.3 Z' fill='#efd27a' stroke='#1a1a1a' stroke-width='1.3'/>
<path d='M17.3 1.2 L18 3 L19.8 3.7 L18 4.4 L17.3 6.2 L16.6 4.4 L14.8 3.7 L16.6 3 Z' fill='#2a2a70'/>
</svg><svg style='left:694px;top:321px' width='22' height='22' viewBox='0 0 22 22'>
<defs><linearGradient id='emg1' x1='0' y1='0' x2='0' y2='1'><stop offset='0' stop-color='#fff'/><stop offset='1' stop-color='#aaa'/></linearGradient></defs>
<rect x='0.8' y='3' width='20' height='9' fill='#7ea6dc' stroke='#3d63a0' stroke-width='1.2'/>
<rect x='4' y='0.8' width='13.5' height='6.5' rx='1' fill='url(#emg1)' stroke='#555' stroke-width='1.2'/>
<path d='M5 12 V20 M8.5 12 V19 M11 12 V20 M14 12 V19 M17 12 V20' stroke='#777' stroke-width='1.4'/>
<circle cx='5' cy='20' r='1.3' fill='#fff' stroke='#888' stroke-width='0.9'/>
<circle cx='11' cy='20.3' r='1.3' fill='#fff' stroke='#888' stroke-width='0.9'/>
<circle cx='17' cy='20' r='1.3' fill='#fff' stroke='#888' stroke-width='0.9'/>
</svg><svg style='left:784px;top:322px' width='19' height='19' viewBox='0 0 19 19'>
<defs><radialGradient id='drg' cx='0.5' cy='0.35' r='0.7'><stop offset='0' stop-color='#ff9c92'/><stop offset='1' stop-color='#e0443a'/></radialGradient></defs>
<circle cx='9.5' cy='9.5' r='8.8' fill='url(#drg)' stroke='#b5433c' stroke-width='1.2'/>
<rect x='5' y='8' width='9' height='3.2' fill='#fff'/>
</svg>
<div class='t lk' style='left:331px;top:319.40px'>Browse</div>
<div class='t lk' style='left:430px;top:319.40px'>Structure</div>
<div class='t lk' style='left:541px;top:319.40px'>Search</div>
<div class='t lk' style='left:637px;top:319.40px'>Insert</div>
<div class='t lk' style='left:720px;top:319.40px'>Empty</div>
<div class='t lk' style='left:809px;top:319.40px'>Drop</div>
<div class='t num' style='left:856px;width:85px;text-align:right;top:321.80px;color:#222'>121</div>
<div class='t' style='left:953px;top:320.80px;color:#222'>InnoDB</div>
<div class='t' style='left:1028px;top:320.80px;color:#222'>utf8mb4_unicode_ci</div>
<div class='t sz' style='left:1209px;top:321.80px'>80.0 KiB</div>
<div class='a' style='left:1366px;top:332px;width:8px;height:2px;background:#444'></div>
<div class='row' style='top:347.80px;height:33.20px'></div>
<div class='cb' style='left:23px;top:357.80px'></div>
<div class='t b lk' style='left:59px;top:353.80px'>wp_postmeta</div>
<svg style='left:266px;top:354px' width='22' height='22' viewBox='0 0 22 22'>
<defs><linearGradient id='stg' x1='0' y1='0' x2='0' y2='1'><stop offset='0' stop-color='#d0cbbd'/><stop offset='1' stop-color='#aba594'/></linearGradient></defs>
<path d='M11.00,1.80 L14.17,7.63 L20.70,8.85 L16.14,13.67 L17.00,20.25 L11.00,17.40 L5.00,20.25 L5.86,13.67 L1.30,8.85 L7.83,7.63 Z' fill='url(#stg)' stroke='#9a9583' stroke-width='1.8' stroke-linejoin='round'/>
</svg><svg style='left:306px;top:355px' width='19' height='19' viewBox='0 0 19 19'><rect x='0.6' y='0.6' width='17.8' height='17.8' fill='#eef5fd' stroke='#7e9fcb' stroke-width='1.2'/>
<path d='M2.5 3.3H16.5' stroke='#7e9fcb' stroke-width='1.2'/>
<path d='M1 7H18M1 10H18M1 13H18M1 16H18M6.3 5V18M12.5 5V18' stroke='#a6bfdf' stroke-width='0.8'/></svg><svg style='left:403px;top:355px' width='23' height='20' viewBox='0 0 23 20'>
<rect x='0.5' y='0.5' width='8' height='19' fill='#e6f0fb'/>
<rect x='15.5' y='0.5' width='6.5' height='19' fill='#e6f0fb'/>
<path d='M1.5 5h6M1.5 8h6M1.5 11h6M1.5 14h6M1.5 17h6M16.5 5h5M16.5 8h5M16.5 11h5M16.5 14h5M16.5 17h5' stroke='#b9c8da' stroke-width='0.9'/>
<path d='M1.5 3h6M16.5 3h5' stroke='#86b57a' stroke-width='1.1'/>
<path d='M0.6 0.8 V19.2' stroke='#a9b7ca' stroke-width='1.1'/>
<path d='M22 0.8 V19.2' stroke='#a9b7ca' stroke-width='1.1'/>
<path d='M0 0.9 H9.3 M8.4 0.9 V19.2 M0 19.2 H9.3' stroke='#7d8ca3' stroke-width='1.7' fill='none'/>
<path d='M15 0.9 H22.6 M15.9 0.9 V19.2 M15 19.2 H22.6' stroke='#7d8ca3' stroke-width='1.7' fill='none'/>
<path d='M6.5 14.5 Q8 15.5 9.5 14 Q13 9.5 17.5 6.8' stroke='#3d7f3d' stroke-width='3.6' fill='none' stroke-linecap='round'/>
<path d='M7 14.6 Q8 15 9.5 13.6 Q13 9.4 17.2 7.2' stroke='#74c266' stroke-width='1.3' fill='none' stroke-linecap='round'/>
</svg><svg style='left:516px;top:355px' width='18' height='18' viewBox='0 0 18 18'>
<circle cx='6.5' cy='7' r='5.6' fill='#dbe8f7' stroke='#b5cce6' stroke-width='1.3'/>
<path d='M10.5 12 L14.5 16.5' stroke='#b88650' stroke-width='3.2' stroke-linecap='round'/>
<path d='M12 3.5 V12.5 M7.5 8 H16.5' stroke='#2f7f2f' stroke-width='3.6'/>
<path d='M12 4.5 V11.5 M8.5 8 H15.5' stroke='#58b84a' stroke-width='1.6'/>
</svg><svg style='left:611px;top:355px' width='20' height='21' viewBox='0 0 20 21'>
<path d='M1.2 2 V19' stroke='#888' stroke-width='1' stroke-dasharray='1.2 0.8'/>
<path d='M0.8 1.2 H7.5 M0.8 19.8 H7.5' stroke='#111' stroke-width='2'/>
<path d='M1.8 4.5 H6 M1.8 16.5 H6' stroke='#aaa' stroke-width='1.1'/>
<path d='M0.8 6.2 H5.5' stroke='#222' stroke-width='1.5'/>
<path d='M0.8 14.2 H5.5' stroke='#444' stroke-width='1.3'/>
<path d='M2.2 10.2 L9.5 4.2 L8.7 8.3 L13.5 8.3 L13.5 12.1 L8.7 12.1 L9.5 16.2 Z' fill='#6d6bd9'/>
<path d='M4 10.2 L8.5 6.8 L8 9.2 L12.5 9.2' stroke='#a9a8f0' stroke-width='0.8' fill='none'/>
<path d='M14.3 7.6 H19.4 V13.6 H14.3 Z' fill='#efd27a' stroke='#1a1a1a' stroke-width='1.3'/>
<path d='M17.3 1.2 L18 3 L19.8 3.7 L18 4.4 L17.3 6.2 L16.6 4.4 L14.8 3.7 L16.6 3 Z' fill='#2a2a70'/>
</svg><svg style='left:694px;top:354px' width='22' height='22' viewBox='0 0 22 22'>
<defs><linearGradient id='emg1' x1='0' y1='0' x2='0' y2='1'><stop offset='0' stop-color='#fff'/><stop offset='1' stop-color='#aaa'/></linearGradient></defs>
<rect x='0.8' y='3' width='20' height='9' fill='#7ea6dc' stroke='#3d63a0' stroke-width='1.2'/>
<rect x='4' y='0.8' width='13.5' height='6.5' rx='1' fill='url(#emg1)' stroke='#555' stroke-width='1.2'/>
<path d='M5 12 V20 M8.5 12 V19 M11 12 V20 M14 12 V19 M17 12 V20' stroke='#777' stroke-width='1.4'/>
<circle cx='5' cy='20' r='1.3' fill='#fff' stroke='#888' stroke-width='0.9'/>
<circle cx='11' cy='20.3' r='1.3' fill='#fff' stroke='#888' stroke-width='0.9'/>
<circle cx='17' cy='20' r='1.3' fill='#fff' stroke='#888' stroke-width='0.9'/>
</svg><svg style='left:784px;top:355px' width='19' height='19' viewBox='0 0 19 19'>
<defs><radialGradient id='drg' cx='0.5' cy='0.35' r='0.7'><stop offset='0' stop-color='#ff9c92'/><stop offset='1' stop-color='#e0443a'/></radialGradient></defs>
<circle cx='9.5' cy='9.5' r='8.8' fill='url(#drg)' stroke='#b5433c' stroke-width='1.2'/>
<rect x='5' y='8' width='9' height='3.2' fill='#fff'/>
</svg>
<div class='t lk' style='left:331px;top:352.40px'>Browse</div>
<div class='t lk' style='left:430px;top:352.40px'>Structure</div>
<div class='t lk' style='left:541px;top:352.40px'>Search</div>
<div class='t lk' style='left:637px;top:352.40px'>Insert</div>
<div class='t lk' style='left:720px;top:352.40px'>Empty</div>
<div class='t lk' style='left:809px;top:352.40px'>Drop</div>
<div class='t num' style='left:856px;width:85px;text-align:right;top:354.80px;color:#222'>2</div>
<div class='t' style='left:953px;top:353.80px;color:#222'>InnoDB</div>
<div class='t' style='left:1028px;top:353.80px;color:#222'>utf8mb4_unicode_ci</div>
<div class='t sz' style='left:1209px;top:354.80px'>48.0 KiB</div>
<div class='a' style='left:1366px;top:365px;width:8px;height:2px;background:#444'></div>
<div class='row even' style='top:381.00px;height:33.00px'></div>
<div class='cb' style='left:23px;top:391.00px'></div>
<div class='t b lk' style='left:59px;top:387.00px'>wp_posts</div>
<svg style='left:266px;top:387px' width='22' height='22' viewBox='0 0 22 22'>
<defs><linearGradient id='stg' x1='0' y1='0' x2='0' y2='1'><stop offset='0' stop-color='#d0cbbd'/><stop offset='1' stop-color='#aba594'/></linearGradient></defs>
<path d='M11.00,1.80 L14.17,7.63 L20.70,8.85 L16.14,13.67 L17.00,20.25 L11.00,17.40 L5.00,20.25 L5.86,13.67 L1.30,8.85 L7.83,7.63 Z' fill='url(#stg)' stroke='#9a9583' stroke-width='1.8' stroke-linejoin='round'/>
</svg><svg style='left:306px;top:388px' width='19' height='19' viewBox='0 0 19 19'><rect x='0.6' y='0.6' width='17.8' height='17.8' fill='#eef5fd' stroke='#7e9fcb' stroke-width='1.2'/>
<path d='M2.5 3.3H16.5' stroke='#7e9fcb' stroke-width='1.2'/>
<path d='M1 7H18M1 10H18M1 13H18M1 16H18M6.3 5V18M12.5 5V18' stroke='#a6bfdf' stroke-width='0.8'/></svg><svg style='left:403px;top:388px' width='23' height='20' viewBox='0 0 23 20'>
<rect x='0.5' y='0.5' width='8' height='19' fill='#e6f0fb'/>
<rect x='15.5' y='0.5' width='6.5' height='19' fill='#e6f0fb'/>
<path d='M1.5 5h6M1.5 8h6M1.5 11h6M1.5 14h6M1.5 17h6M16.5 5h5M16.5 8h5M16.5 11h5M16.5 14h5M16.5 17h5' stroke='#b9c8da' stroke-width='0.9'/>
<path d='M1.5 3h6M16.5 3h5' stroke='#86b57a' stroke-width='1.1'/>
<path d='M0.6 0.8 V19.2' stroke='#a9b7ca' stroke-width='1.1'/>
<path d='M22 0.8 V19.2' stroke='#a9b7ca' stroke-width='1.1'/>
<path d='M0 0.9 H9.3 M8.4 0.9 V19.2 M0 19.2 H9.3' stroke='#7d8ca3' stroke-width='1.7' fill='none'/>
<path d='M15 0.9 H22.6 M15.9 0.9 V19.2 M15 19.2 H22.6' stroke='#7d8ca3' stroke-width='1.7' fill='none'/>
<path d='M6.5 14.5 Q8 15.5 9.5 14 Q13 9.5 17.5 6.8' stroke='#3d7f3d' stroke-width='3.6' fill='none' stroke-linecap='round'/>
<path d='M7 14.6 Q8 15 9.5 13.6 Q13 9.4 17.2 7.2' stroke='#74c266' stroke-width='1.3' fill='none' stroke-linecap='round'/>
</svg><svg style='left:516px;top:388px' width='18' height='18' viewBox='0 0 18 18'>
<circle cx='6.5' cy='7' r='5.6' fill='#dbe8f7' stroke='#b5cce6' stroke-width='1.3'/>
<path d='M10.5 12 L14.5 16.5' stroke='#b88650' stroke-width='3.2' stroke-linecap='round'/>
<path d='M12 3.5 V12.5 M7.5 8 H16.5' stroke='#2f7f2f' stroke-width='3.6'/>
<path d='M12 4.5 V11.5 M8.5 8 H15.5' stroke='#58b84a' stroke-width='1.6'/>
</svg><svg style='left:611px;top:388px' width='20' height='21' viewBox='0 0 20 21'>
<path d='M1.2 2 V19' stroke='#888' stroke-width='1' stroke-dasharray='1.2 0.8'/>
<path d='M0.8 1.2 H7.5 M0.8 19.8 H7.5' stroke='#111' stroke-width='2'/>
<path d='M1.8 4.5 H6 M1.8 16.5 H6' stroke='#aaa' stroke-width='1.1'/>
<path d='M0.8 6.2 H5.5' stroke='#222' stroke-width='1.5'/>
<path d='M0.8 14.2 H5.5' stroke='#444' stroke-width='1.3'/>
<path d='M2.2 10.2 L9.5 4.2 L8.7 8.3 L13.5 8.3 L13.5 12.1 L8.7 12.1 L9.5 16.2 Z' fill='#6d6bd9'/>
<path d='M4 10.2 L8.5 6.8 L8 9.2 L12.5 9.2' stroke='#a9a8f0' stroke-width='0.8' fill='none'/>
<path d='M14.3 7.6 H19.4 V13.6 H14.3 Z' fill='#efd27a' stroke='#1a1a1a' stroke-width='1.3'/>
<path d='M17.3 1.2 L18 3 L19.8 3.7 L18 4.4 L17.3 6.2 L16.6 4.4 L14.8 3.7 L16.6 3 Z' fill='#2a2a70'/>
</svg><svg style='left:694px;top:387px' width='22' height='22' viewBox='0 0 22 22'>
<defs><linearGradient id='emg1' x1='0' y1='0' x2='0' y2='1'><stop offset='0' stop-color='#fff'/><stop offset='1' stop-color='#aaa'/></linearGradient></defs>
<rect x='0.8' y='3' width='20' height='9' fill='#7ea6dc' stroke='#3d63a0' stroke-width='1.2'/>
<rect x='4' y='0.8' width='13.5' height='6.5' rx='1' fill='url(#emg1)' stroke='#555' stroke-width='1.2'/>
<path d='M5 12 V20 M8.5 12 V19 M11 12 V20 M14 12 V19 M17 12 V20' stroke='#777' stroke-width='1.4'/>
<circle cx='5' cy='20' r='1.3' fill='#fff' stroke='#888' stroke-width='0.9'/>
<circle cx='11' cy='20.3' r='1.3' fill='#fff' stroke='#888' stroke-width='0.9'/>
<circle cx='17' cy='20' r='1.3' fill='#fff' stroke='#888' stroke-width='0.9'/>
</svg><svg style='left:784px;top:388px' width='19' height='19' viewBox='0 0 19 19'>
<defs><radialGradient id='drg' cx='0.5' cy='0.35' r='0.7'><stop offset='0' stop-color='#ff9c92'/><stop offset='1' stop-color='#e0443a'/></radialGradient></defs>
<circle cx='9.5' cy='9.5' r='8.8' fill='url(#drg)' stroke='#b5433c' stroke-width='1.2'/>
<rect x='5' y='8' width='9' height='3.2' fill='#fff'/>
</svg>
<div class='t lk' style='left:331px;top:385.60px'>Browse</div>
<div class='t lk' style='left:430px;top:385.60px'>Structure</div>
<div class='t lk' style='left:541px;top:385.60px'>Search</div>
<div class='t lk' style='left:637px;top:385.60px'>Insert</div>
<div class='t lk' style='left:720px;top:385.60px'>Empty</div>
<div class='t lk' style='left:809px;top:385.60px'>Drop</div>
<div class='t num' style='left:856px;width:85px;text-align:right;top:388.00px;color:#222'>3</div>
<div class='t' style='left:953px;top:387.00px;color:#222'>InnoDB</div>
<div class='t' style='left:1028px;top:387.00px;color:#222'>utf8mb4_unicode_ci</div>
<div class='t sz' style='left:1209px;top:388.00px'>80.0 KiB</div>
<div class='a' style='left:1366px;top:398px;width:8px;height:2px;background:#444'></div>
<div class='row' style='top:414.00px;height:33.00px'></div>
<div class='cb' style='left:23px;top:424.00px'></div>
<div class='t b lk' style='left:59px;top:420.00px'>wp_termmeta</div>
<svg style='left:266px;top:420px' width='22' height='22' viewBox='0 0 22 22'>
<defs><linearGradient id='stg' x1='0' y1='0' x2='0' y2='1'><stop offset='0' stop-color='#d0cbbd'/><stop offset='1' stop-color='#aba594'/></linearGradient></defs>
<path d='M11.00,1.80 L14.17,7.63 L20.70,8.85 L16.14,13.67 L17.00,20.25 L11.00,17.40 L5.00,20.25 L5.86,13.67 L1.30,8.85 L7.83,7.63 Z' fill='url(#stg)' stroke='#9a9583' stroke-width='1.8' stroke-linejoin='round'/>
</svg><svg style='left:306px;top:421px' width='19' height='19' viewBox='0 0 19 19'><rect x='0.6' y='0.6' width='17.8' height='17.8' fill='#fbfbfb' stroke='#9a9a9a' stroke-width='1.2'/>
<path d='M2.5 3.3H16.5' stroke='#8a8a8a' stroke-width='1.2'/>
<path d='M1 7H18M1 10H18M1 13H18M1 16H18M6.3 5V18M12.5 5V18' stroke='#c4c4c4' stroke-width='0.8'/></svg><svg style='left:403px;top:421px' width='23' height='20' viewBox='0 0 23 20'>
<rect x='0.5' y='0.5' width='8' height='19' fill='#e6f0fb'/>
<rect x='15.5' y='0.5' width='6.5' height='19' fill='#e6f0fb'/>
<path d='M1.5 5h6M1.5 8h6M1.5 11h6M1.5 14h6M1.5 17h6M16.5 5h5M16.5 8h5M16.5 11h5M16.5 14h5M16.5 17h5' stroke='#b9c8da' stroke-width='0.9'/>
<path d='M1.5 3h6M16.5 3h5' stroke='#86b57a' stroke-width='1.1'/>
<path d='M0.6 0.8 V19.2' stroke='#a9b7ca' stroke-width='1.1'/>
<path d='M22 0.8 V19.2' stroke='#a9b7ca' stroke-width='1.1'/>
<path d='M0 0.9 H9.3 M8.4 0.9 V19.2 M0 19.2 H9.3' stroke='#7d8ca3' stroke-width='1.7' fill='none'/>
<path d='M15 0.9 H22.6 M15.9 0.9 V19.2 M15 19.2 H22.6' stroke='#7d8ca3' stroke-width='1.7' fill='none'/>
<path d='M6.5 14.5 Q8 15.5 9.5 14 Q13 9.5 17.5 6.8' stroke='#3d7f3d' stroke-width='3.6' fill='none' stroke-linecap='round'/>
<path d='M7 14.6 Q8 15 9.5 13.6 Q13 9.4 17.2 7.2' stroke='#74c266' stroke-width='1.3' fill='none' stroke-linecap='round'/>
</svg><svg style='left:516px;top:421px' width='18' height='18' viewBox='0 0 18 18'>
<circle cx='6.5' cy='7' r='5.6' fill='#ececec' stroke='#cfcfcf' stroke-width='1.3'/>
<path d='M10.5 12 L14.5 16.5' stroke='#6a6a6a' stroke-width='3.2' stroke-linecap='round'/>
<path d='M10.8 12.3 L13.8 15.8' stroke='#ddd' stroke-width='1.2' stroke-linecap='round'/>
<path d='M12 3.5 V12.5 M7.5 8 H16.5' stroke='#333' stroke-width='3.6'/>
<path d='M12 4.5 V11.5 M8.5 8 H15.5' stroke='#8a8a8a' stroke-width='1.6'/>
</svg><svg style='left:611px;top:421px' width='20' height='21' viewBox='0 0 20 21'>
<path d='M1.2 2 V19' stroke='#888' stroke-width='1' stroke-dasharray='1.2 0.8'/>
<path d='M0.8 1.2 H7.5 M0.8 19.8 H7.5' stroke='#111' stroke-width='2'/>
<path d='M1.8 4.5 H6 M1.8 16.5 H6' stroke='#aaa' stroke-width='1.1'/>
<path d='M0.8 6.2 H5.5' stroke='#222' stroke-width='1.5'/>
<path d='M0.8 14.2 H5.5' stroke='#444' stroke-width='1.3'/>
<path d='M2.2 10.2 L9.5 4.2 L8.7 8.3 L13.5 8.3 L13.5 12.1 L8.7 12.1 L9.5 16.2 Z' fill='#6d6bd9'/>
<path d='M4 10.2 L8.5 6.8 L8 9.2 L12.5 9.2' stroke='#a9a8f0' stroke-width='0.8' fill='none'/>
<path d='M14.3 7.6 H19.4 V13.6 H14.3 Z' fill='#efd27a' stroke='#1a1a1a' stroke-width='1.3'/>
<path d='M17.3 1.2 L18 3 L19.8 3.7 L18 4.4 L17.3 6.2 L16.6 4.4 L14.8 3.7 L16.6 3 Z' fill='#2a2a70'/>
</svg><svg style='left:694px;top:420px' width='22' height='22' viewBox='0 0 22 22'>
<defs><linearGradient id='emg0' x1='0' y1='0' x2='0' y2='1'><stop offset='0' stop-color='#fff'/><stop offset='1' stop-color='#aaa'/></linearGradient></defs>
<rect x='0.8' y='3' width='20' height='9' fill='#cfcfcf' stroke='#6f6f6f' stroke-width='1.2'/>
<rect x='4' y='0.8' width='13.5' height='6.5' rx='1' fill='url(#emg0)' stroke='#555' stroke-width='1.2'/>
<path d='M5 12 V20 M8.5 12 V19 M11 12 V20 M14 12 V19 M17 12 V20' stroke='#777' stroke-width='1.4'/>
<circle cx='5' cy='20' r='1.3' fill='#fff' stroke='#888' stroke-width='0.9'/>
<circle cx='11' cy='20.3' r='1.3' fill='#fff' stroke='#888' stroke-width='0.9'/>
<circle cx='17' cy='20' r='1.3' fill='#fff' stroke='#888' stroke-width='0.9'/>
</svg><svg style='left:784px;top:421px' width='19' height='19' viewBox='0 0 19 19'>
<defs><radialGradient id='drg' cx='0.5' cy='0.35' r='0.7'><stop offset='0' stop-color='#ff9c92'/><stop offset='1' stop-color='#e0443a'/></radialGradient></defs>
<circle cx='9.5' cy='9.5' r='8.8' fill='url(#drg)' stroke='#b5433c' stroke-width='1.2'/>
<rect x='5' y='8' width='9' height='3.2' fill='#fff'/>
</svg>
<div class='t lk' style='left:331px;top:418.60px'>Browse</div>
<div class='t lk' style='left:430px;top:418.60px'>Structure</div>
<div class='t lk' style='left:541px;top:418.60px'>Search</div>
<div class='t lk' style='left:637px;top:418.60px'>Insert</div>
<div class='t lk' style='left:720px;top:418.60px'>Empty</div>
<div class='t lk' style='left:809px;top:418.60px'>Drop</div>
<div class='t num' style='left:856px;width:85px;text-align:right;top:421.00px;color:#222'>0</div>
<div class='t' style='left:953px;top:420.00px;color:#222'>InnoDB</div>
<div class='t' style='left:1028px;top:420.00px;color:#222'>utf8mb4_unicode_ci</div>
<div class='t sz' style='left:1209px;top:421.00px'>48.0 KiB</div>
<div class='a' style='left:1366px;top:431px;width:8px;height:2px;background:#444'></div>
<div class='row even' style='top:447.00px;height:33.00px'></div>
<div class='cb' style='left:23px;top:457.00px'></div>
<div class='t b lk' style='left:59px;top:453.00px'>wp_terms</div>
<svg style='left:266px;top:453px' width='22' height='22' viewBox='0 0 22 22'>
<defs><linearGradient id='stg' x1='0' y1='0' x2='0' y2='1'><stop offset='0' stop-color='#d0cbbd'/><stop offset='1' stop-color='#aba594'/></linearGradient></defs>
<path d='M11.00,1.80 L14.17,7.63 L20.70,8.85 L16.14,13.67 L17.00,20.25 L11.00,17.40 L5.00,20.25 L5.86,13.67 L1.30,8.85 L7.83,7.63 Z' fill='url(#stg)' stroke='#9a9583' stroke-width='1.8' stroke-linejoin='round'/>
</svg><svg style='left:306px;top:454px' width='19' height='19' viewBox='0 0 19 19'><rect x='0.6' y='0.6' width='17.8' height='17.8' fill='#eef5fd' stroke='#7e9fcb' stroke-width='1.2'/>
<path d='M2.5 3.3H16.5' stroke='#7e9fcb' stroke-width='1.2'/>
<path d='M1 7H18M1 10H18M1 13H18M1 16H18M6.3 5V18M12.5 5V18' stroke='#a6bfdf' stroke-width='0.8'/></svg><svg style='left:403px;top:454px' width='23' height='20' viewBox='0 0 23 20'>
<rect x='0.5' y='0.5' width='8' height='19' fill='#e6f0fb'/>
<rect x='15.5' y='0.5' width='6.5' height='19' fill='#e6f0fb'/>
<path d='M1.5 5h6M1.5 8h6M1.5 11h6M1.5 14h6M1.5 17h6M16.5 5h5M16.5 8h5M16.5 11h5M16.5 14h5M16.5 17h5' stroke='#b9c8da' stroke-width='0.9'/>
<path d='M1.5 3h6M16.5 3h5' stroke='#86b57a' stroke-width='1.1'/>
<path d='M0.6 0.8 V19.2' stroke='#a9b7ca' stroke-width='1.1'/>
<path d='M22 0.8 V19.2' stroke='#a9b7ca' stroke-width='1.1'/>
<path d='M0 0.9 H9.3 M8.4 0.9 V19.2 M0 19.2 H9.3' stroke='#7d8ca3' stroke-width='1.7' fill='none'/>
<path d='M15 0.9 H22.6 M15.9 0.9 V19.2 M15 19.2 H22.6' stroke='#7d8ca3' stroke-width='1.7' fill='none'/>
<path d='M6.5 14.5 Q8 15.5 9.5 14 Q13 9.5 17.5 6.8' stroke='#3d7f3d' stroke-width='3.6' fill='none' stroke-linecap='round'/>
<path d='M7 14.6 Q8 15 9.5 13.6 Q13 9.4 17.2 7.2' stroke='#74c266' stroke-width='1.3' fill='none' stroke-linecap='round'/>
</svg><svg style='left:516px;top:454px' width='18' height='18' viewBox='0 0 18 18'>
<circle cx='6.5' cy='7' r='5.6' fill='#dbe8f7' stroke='#b5cce6' stroke-width='1.3'/>
<path d='M10.5 12 L14.5 16.5' stroke='#b88650' stroke-width='3.2' stroke-linecap='round'/>
<path d='M12 3.5 V12.5 M7.5 8 H16.5' stroke='#2f7f2f' stroke-width='3.6'/>
<path d='M12 4.5 V11.5 M8.5 8 H15.5' stroke='#58b84a' stroke-width='1.6'/>
</svg><svg style='left:611px;top:454px' width='20' height='21' viewBox='0 0 20 21'>
<path d='M1.2 2 V19' stroke='#888' stroke-width='1' stroke-dasharray='1.2 0.8'/>
<path d='M0.8 1.2 H7.5 M0.8 19.8 H7.5' stroke='#111' stroke-width='2'/>
<path d='M1.8 4.5 H6 M1.8 16.5 H6' stroke='#aaa' stroke-width='1.1'/>
<path d='M0.8 6.2 H5.5' stroke='#222' stroke-width='1.5'/>
<path d='M0.8 14.2 H5.5' stroke='#444' stroke-width='1.3'/>
<path d='M2.2 10.2 L9.5 4.2 L8.7 8.3 L13.5 8.3 L13.5 12.1 L8.7 12.1 L9.5 16.2 Z' fill='#6d6bd9'/>
<path d='M4 10.2 L8.5 6.8 L8 9.2 L12.5 9.2' stroke='#a9a8f0' stroke-width='0.8' fill='none'/>
<path d='M14.3 7.6 H19.4 V13.6 H14.3 Z' fill='#efd27a' stroke='#1a1a1a' stroke-width='1.3'/>
<path d='M17.3 1.2 L18 3 L19.8 3.7 L18 4.4 L17.3 6.2 L16.6 4.4 L14.8 3.7 L16.6 3 Z' fill='#2a2a70'/>
</svg><svg style='left:694px;top:453px' width='22' height='22' viewBox='0 0 22 22'>
<defs><linearGradient id='emg1' x1='0' y1='0' x2='0' y2='1'><stop offset='0' stop-color='#fff'/><stop offset='1' stop-color='#aaa'/></linearGradient></defs>
<rect x='0.8' y='3' width='20' height='9' fill='#7ea6dc' stroke='#3d63a0' stroke-width='1.2'/>
<rect x='4' y='0.8' width='13.5' height='6.5' rx='1' fill='url(#emg1)' stroke='#555' stroke-width='1.2'/>
<path d='M5 12 V20 M8.5 12 V19 M11 12 V20 M14 12 V19 M17 12 V20' stroke='#777' stroke-width='1.4'/>
<circle cx='5' cy='20' r='1.3' fill='#fff' stroke='#888' stroke-width='0.9'/>
<circle cx='11' cy='20.3' r='1.3' fill='#fff' stroke='#888' stroke-width='0.9'/>
<circle cx='17' cy='20' r='1.3' fill='#fff' stroke='#888' stroke-width='0.9'/>
</svg><svg style='left:784px;top:454px' width='19' height='19' viewBox='0 0 19 19'>
<defs><radialGradient id='drg' cx='0.5' cy='0.35' r='0.7'><stop offset='0' stop-color='#ff9c92'/><stop offset='1' stop-color='#e0443a'/></radialGradient></defs>
<circle cx='9.5' cy='9.5' r='8.8' fill='url(#drg)' stroke='#b5433c' stroke-width='1.2'/>
<rect x='5' y='8' width='9' height='3.2' fill='#fff'/>
</svg>
<div class='t lk' style='left:331px;top:451.60px'>Browse</div>
<div class='t lk' style='left:430px;top:451.60px'>Structure</div>
<div class='t lk' style='left:541px;top:451.60px'>Search</div>
<div class='t lk' style='left:637px;top:451.60px'>Insert</div>
<div class='t lk' style='left:720px;top:451.60px'>Empty</div>
<div class='t lk' style='left:809px;top:451.60px'>Drop</div>
<div class='t num' style='left:856px;width:85px;text-align:right;top:454.00px;color:#222'>1</div>
<div class='t' style='left:953px;top:453.00px;color:#222'>InnoDB</div>
<div class='t' style='left:1028px;top:453.00px;color:#222'>utf8mb4_unicode_ci</div>
<div class='t sz' style='left:1209px;top:454.00px'>48.0 KiB</div>
<div class='a' style='left:1366px;top:464px;width:8px;height:2px;background:#444'></div>
<div class='row' style='top:480.00px;height:32.80px'></div>
<div class='cb' style='left:23px;top:490.00px'></div>
<div class='t b lk' style='left:59px;top:486.00px'>wp_term_relationships</div>
<svg style='left:266px;top:486px' width='22' height='22' viewBox='0 0 22 22'>
<defs><linearGradient id='stg' x1='0' y1='0' x2='0' y2='1'><stop offset='0' stop-color='#d0cbbd'/><stop offset='1' stop-color='#aba594'/></linearGradient></defs>
<path d='M11.00,1.80 L14.17,7.63 L20.70,8.85 L16.14,13.67 L17.00,20.25 L11.00,17.40 L5.00,20.25 L5.86,13.67 L1.30,8.85 L7.83,7.63 Z' fill='url(#stg)' stroke='#9a9583' stroke-width='1.8' stroke-linejoin='round'/>
</svg><svg style='left:306px;top:487px' width='19' height='19' viewBox='0 0 19 19'><rect x='0.6' y='0.6' width='17.8' height='17.8' fill='#eef5fd' stroke='#7e9fcb' stroke-width='1.2'/>
<path d='M2.5 3.3H16.5' stroke='#7e9fcb' stroke-width='1.2'/>
<path d='M1 7H18M1 10H18M1 13H18M1 16H18M6.3 5V18M12.5 5V18' stroke='#a6bfdf' stroke-width='0.8'/></svg><svg style='left:403px;top:487px' width='23' height='20' viewBox='0 0 23 20'>
<rect x='0.5' y='0.5' width='8' height='19' fill='#e6f0fb'/>
<rect x='15.5' y='0.5' width='6.5' height='19' fill='#e6f0fb'/>
<path d='M1.5 5h6M1.5 8h6M1.5 11h6M1.5 14h6M1.5 17h6M16.5 5h5M16.5 8h5M16.5 11h5M16.5 14h5M16.5 17h5' stroke='#b9c8da' stroke-width='0.9'/>
<path d='M1.5 3h6M16.5 3h5' stroke='#86b57a' stroke-width='1.1'/>
<path d='M0.6 0.8 V19.2' stroke='#a9b7ca' stroke-width='1.1'/>
<path d='M22 0.8 V19.2' stroke='#a9b7ca' stroke-width='1.1'/>
<path d='M0 0.9 H9.3 M8.4 0.9 V19.2 M0 19.2 H9.3' stroke='#7d8ca3' stroke-width='1.7' fill='none'/>
<path d='M15 0.9 H22.6 M15.9 0.9 V19.2 M15 19.2 H22.6' stroke='#7d8ca3' stroke-width='1.7' fill='none'/>
<path d='M6.5 14.5 Q8 15.5 9.5 14 Q13 9.5 17.5 6.8' stroke='#3d7f3d' stroke-width='3.6' fill='none' stroke-linecap='round'/>
<path d='M7 14.6 Q8 15 9.5 13.6 Q13 9.4 17.2 7.2' stroke='#74c266' stroke-width='1.3' fill='none' stroke-linecap='round'/>
</svg><svg style='left:516px;top:487px' width='18' height='18' viewBox='0 0 18 18'>
<circle cx='6.5' cy='7' r='5.6' fill='#dbe8f7' stroke='#b5cce6' stroke-width='1.3'/>
<path d='M10.5 12 L14.5 16.5' stroke='#b88650' stroke-width='3.2' stroke-linecap='round'/>
<path d='M12 3.5 V12.5 M7.5 8 H16.5' stroke='#2f7f2f' stroke-width='3.6'/>
<path d='M12 4.5 V11.5 M8.5 8 H15.5' stroke='#58b84a' stroke-width='1.6'/>
</svg><svg style='left:611px;top:487px' width='20' height='21' viewBox='0 0 20 21'>
<path d='M1.2 2 V19' stroke='#888' stroke-width='1' stroke-dasharray='1.2 0.8'/>
<path d='M0.8 1.2 H7.5 M0.8 19.8 H7.5' stroke='#111' stroke-width='2'/>
<path d='M1.8 4.5 H6 M1.8 16.5 H6' stroke='#aaa' stroke-width='1.1'/>
<path d='M0.8 6.2 H5.5' stroke='#222' stroke-width='1.5'/>
<path d='M0.8 14.2 H5.5' stroke='#444' stroke-width='1.3'/>
<path d='M2.2 10.2 L9.5 4.2 L8.7 8.3 L13.5 8.3 L13.5 12.1 L8.7 12.1 L9.5 16.2 Z' fill='#6d6bd9'/>
<path d='M4 10.2 L8.5 6.8 L8 9.2 L12.5 9.2' stroke='#a9a8f0' stroke-width='0.8' fill='none'/>
<path d='M14.3 7.6 H19.4 V13.6 H14.3 Z' fill='#efd27a' stroke='#1a1a1a' stroke-width='1.3'/>
<path d='M17.3 1.2 L18 3 L19.8 3.7 L18 4.4 L17.3 6.2 L16.6 4.4 L14.8 3.7 L16.6 3 Z' fill='#2a2a70'/>
</svg><svg style='left:694px;top:486px' width='22' height='22' viewBox='0 0 22 22'>
<defs><linearGradient id='emg1' x1='0' y1='0' x2='0' y2='1'><stop offset='0' stop-color='#fff'/><stop offset='1' stop-color='#aaa'/></linearGradient></defs>
<rect x='0.8' y='3' width='20' height='9' fill='#7ea6dc' stroke='#3d63a0' stroke-width='1.2'/>
<rect x='4' y='0.8' width='13.5' height='6.5' rx='1' fill='url(#emg1)' stroke='#555' stroke-width='1.2'/>
<path d='M5 12 V20 M8.5 12 V19 M11 12 V20 M14 12 V19 M17 12 V20' stroke='#777' stroke-width='1.4'/>
<circle cx='5' cy='20' r='1.3' fill='#fff' stroke='#888' stroke-width='0.9'/>
<circle cx='11' cy='20.3' r='1.3' fill='#fff' stroke='#888' stroke-width='0.9'/>
<circle cx='17' cy='20' r='1.3' fill='#fff' stroke='#888' stroke-width='0.9'/>
</svg><svg style='left:784px;top:487px' width='19' height='19' viewBox='0 0 19 19'>
<defs><radialGradient id='drg' cx='0.5' cy='0.35' r='0.7'><stop offset='0' stop-color='#ff9c92'/><stop offset='1' stop-color='#e0443a'/></radialGradient></defs>
<circle cx='9.5' cy='9.5' r='8.8' fill='url(#drg)' stroke='#b5433c' stroke-width='1.2'/>
<rect x='5' y='8' width='9' height='3.2' fill='#fff'/>
</svg>
<div class='t lk' style='left:331px;top:484.60px'>Browse</div>
<div class='t lk' style='left:430px;top:484.60px'>Structure</div>
<div class='t lk' style='left:541px;top:484.60px'>Search</div>
<div class='t lk' style='left:637px;top:484.60px'>Insert</div>
<div class='t lk' style='left:720px;top:484.60px'>Empty</div>
<div class='t lk' style='left:809px;top:484.60px'>Drop</div>
<div class='t num' style='left:856px;width:85px;text-align:right;top:487.00px;color:#222'>1</div>
<div class='t' style='left:953px;top:486.00px;color:#222'>InnoDB</div>
<div class='t' style='left:1028px;top:486.00px;color:#222'>utf8mb4_unicode_ci</div>
<div class='t sz' style='left:1209px;top:487.00px'>32.0 KiB</div>
<div class='a' style='left:1366px;top:497px;width:8px;height:2px;background:#444'></div>
<div class='row even' style='top:512.80px;height:32.20px'></div>
<div class='cb' style='left:23px;top:522.80px'></div>
<div class='t b lk' style='left:59px;top:518.80px'>wp_term_taxonomy</div>
<svg style='left:266px;top:519px' width='22' height='22' viewBox='0 0 22 22'>
<defs><linearGradient id='stg' x1='0' y1='0' x2='0' y2='1'><stop offset='0' stop-color='#d0cbbd'/><stop offset='1' stop-color='#aba594'/></linearGradient></defs>
<path d='M11.00,1.80 L14.17,7.63 L20.70,8.85 L16.14,13.67 L17.00,20.25 L11.00,17.40 L5.00,20.25 L5.86,13.67 L1.30,8.85 L7.83,7.63 Z' fill='url(#stg)' stroke='#9a9583' stroke-width='1.8' stroke-linejoin='round'/>
</svg><svg style='left:306px;top:520px' width='19' height='19' viewBox='0 0 19 19'><rect x='0.6' y='0.6' width='17.8' height='17.8' fill='#eef5fd' stroke='#7e9fcb' stroke-width='1.2'/>
<path d='M2.5 3.3H16.5' stroke='#7e9fcb' stroke-width='1.2'/>
<path d='M1 7H18M1 10H18M1 13H18M1 16H18M6.3 5V18M12.5 5V18' stroke='#a6bfdf' stroke-width='0.8'/></svg><svg style='left:403px;top:520px' width='23' height='20' viewBox='0 0 23 20'>
<rect x='0.5' y='0.5' width='8' height='19' fill='#e6f0fb'/>
<rect x='15.5' y='0.5' width='6.5' height='19' fill='#e6f0fb'/>
<path d='M1.5 5h6M1.5 8h6M1.5 11h6M1.5 14h6M1.5 17h6M16.5 5h5M16.5 8h5M16.5 11h5M16.5 14h5M16.5 17h5' stroke='#b9c8da' stroke-width='0.9'/>
<path d='M1.5 3h6M16.5 3h5' stroke='#86b57a' stroke-width='1.1'/>
<path d='M0.6 0.8 V19.2' stroke='#a9b7ca' stroke-width='1.1'/>
<path d='M22 0.8 V19.2' stroke='#a9b7ca' stroke-width='1.1'/>
<path d='M0 0.9 H9.3 M8.4 0.9 V19.2 M0 19.2 H9.3' stroke='#7d8ca3' stroke-width='1.7' fill='none'/>
<path d='M15 0.9 H22.6 M15.9 0.9 V19.2 M15 19.2 H22.6' stroke='#7d8ca3' stroke-width='1.7' fill='none'/>
<path d='M6.5 14.5 Q8 15.5 9.5 14 Q13 9.5 17.5 6.8' stroke='#3d7f3d' stroke-width='3.6' fill='none' stroke-linecap='round'/>
<path d='M7 14.6 Q8 15 9.5 13.6 Q13 9.4 17.2 7.2' stroke='#74c266' stroke-width='1.3' fill='none' stroke-linecap='round'/>
</svg><svg style='left:516px;top:520px' width='18' height='18' viewBox='0 0 18 18'>
<circle cx='6.5' cy='7' r='5.6' fill='#dbe8f7' stroke='#b5cce6' stroke-width='1.3'/>
<path d='M10.5 12 L14.5 16.5' stroke='#b88650' stroke-width='3.2' stroke-linecap='round'/>
<path d='M12 3.5 V12.5 M7.5 8 H16.5' stroke='#2f7f2f' stroke-width='3.6'/>
<path d='M12 4.5 V11.5 M8.5 8 H15.5' stroke='#58b84a' stroke-width='1.6'/>
</svg><svg style='left:611px;top:520px' width='20' height='21' viewBox='0 0 20 21'>
<path d='M1.2 2 V19' stroke='#888' stroke-width='1' stroke-dasharray='1.2 0.8'/>
<path d='M0.8 1.2 H7.5 M0.8 19.8 H7.5' stroke='#111' stroke-width='2'/>
<path d='M1.8 4.5 H6 M1.8 16.5 H6' stroke='#aaa' stroke-width='1.1'/>
<path d='M0.8 6.2 H5.5' stroke='#222' stroke-width='1.5'/>
<path d='M0.8 14.2 H5.5' stroke='#444' stroke-width='1.3'/>
<path d='M2.2 10.2 L9.5 4.2 L8.7 8.3 L13.5 8.3 L13.5 12.1 L8.7 12.1 L9.5 16.2 Z' fill='#6d6bd9'/>
<path d='M4 10.2 L8.5 6.8 L8 9.2 L12.5 9.2' stroke='#a9a8f0' stroke-width='0.8' fill='none'/>
<path d='M14.3 7.6 H19.4 V13.6 H14.3 Z' fill='#efd27a' stroke='#1a1a1a' stroke-width='1.3'/>
<path d='M17.3 1.2 L18 3 L19.8 3.7 L18 4.4 L17.3 6.2 L16.6 4.4 L14.8 3.7 L16.6 3 Z' fill='#2a2a70'/>
</svg><svg style='left:694px;top:519px' width='22' height='22' viewBox='0 0 22 22'>
<defs><linearGradient id='emg1' x1='0' y1='0' x2='0' y2='1'><stop offset='0' stop-color='#fff'/><stop offset='1' stop-color='#aaa'/></linearGradient></defs>
<rect x='0.8' y='3' width='20' height='9' fill='#7ea6dc' stroke='#3d63a0' stroke-width='1.2'/>
<rect x='4' y='0.8' width='13.5' height='6.5' rx='1' fill='url(#emg1)' stroke='#555' stroke-width='1.2'/>
<path d='M5 12 V20 M8.5 12 V19 M11 12 V20 M14 12 V19 M17 12 V20' stroke='#777' stroke-width='1.4'/>
<circle cx='5' cy='20' r='1.3' fill='#fff' stroke='#888' stroke-width='0.9'/>
<circle cx='11' cy='20.3' r='1.3' fill='#fff' stroke='#888' stroke-width='0.9'/>
<circle cx='17' cy='20' r='1.3' fill='#fff' stroke='#888' stroke-width='0.9'/>
</svg><svg style='left:784px;top:520px' width='19' height='19' viewBox='0 0 19 19'>
<defs><radialGradient id='drg' cx='0.5' cy='0.35' r='0.7'><stop offset='0' stop-color='#ff9c92'/><stop offset='1' stop-color='#e0443a'/></radialGradient></defs>
<circle cx='9.5' cy='9.5' r='8.8' fill='url(#drg)' stroke='#b5433c' stroke-width='1.2'/>
<rect x='5' y='8' width='9' height='3.2' fill='#fff'/>
</svg>
<div class='t lk' style='left:331px;top:517.40px'>Browse</div>
<div class='t lk' style='left:430px;top:517.40px'>Structure</div>
<div class='t lk' style='left:541px;top:517.40px'>Search</div>
<div class='t lk' style='left:637px;top:517.40px'>Insert</div>
<div class='t lk' style='left:720px;top:517.40px'>Empty</div>
<div class='t lk' style='left:809px;top:517.40px'>Drop</div>
<div class='t num' style='left:856px;width:85px;text-align:right;top:519.80px;color:#222'>1</div>
<div class='t' style='left:953px;top:518.80px;color:#222'>InnoDB</div>
<div class='t' style='left:1028px;top:518.80px;color:#222'>utf8mb4_unicode_ci</div>
<div class='t sz' style='left:1209px;top:519.80px'>48.0 KiB</div>
<div class='a' style='left:1366px;top:530px;width:8px;height:2px;background:#444'></div>
<div class='row' style='top:545.00px;height:33.60px'></div>
<div class='cb' style='left:23px;top:555.00px'></div>
<div class='t b lk' style='left:59px;top:551.00px'>wp_usermeta</div>
<svg style='left:266px;top:551px' width='22' height='22' viewBox='0 0 22 22'>
<defs><linearGradient id='stg' x1='0' y1='0' x2='0' y2='1'><stop offset='0' stop-color='#d0cbbd'/><stop offset='1' stop-color='#aba594'/></linearGradient></defs>
<path d='M11.00,1.80 L14.17,7.63 L20.70,8.85 L16.14,13.67 L17.00,20.25 L11.00,17.40 L5.00,20.25 L5.86,13.67 L1.30,8.85 L7.83,7.63 Z' fill='url(#stg)' stroke='#9a9583' stroke-width='1.8' stroke-linejoin='round'/>
</svg><svg style='left:306px;top:552px' width='19' height='19' viewBox='0 0 19 19'><rect x='0.6' y='0.6' width='17.8' height='17.8' fill='#eef5fd' stroke='#7e9fcb' stroke-width='1.2'/>
<path d='M2.5 3.3H16.5' stroke='#7e9fcb' stroke-width='1.2'/>
<path d='M1 7H18M1 10H18M1 13H18M1 16H18M6.3 5V18M12.5 5V18' stroke='#a6bfdf' stroke-width='0.8'/></svg><svg style='left:403px;top:552px' width='23' height='20' viewBox='0 0 23 20'>
<rect x='0.5' y='0.5' width='8' height='19' fill='#e6f0fb'/>
<rect x='15.5' y='0.5' width='6.5' height='19' fill='#e6f0fb'/>
<path d='M1.5 5h6M1.5 8h6M1.5 11h6M1.5 14h6M1.5 17h6M16.5 5h5M16.5 8h5M16.5 11h5M16.5 14h5M16.5 17h5' stroke='#b9c8da' stroke-width='0.9'/>
<path d='M1.5 3h6M16.5 3h5' stroke='#86b57a' stroke-width='1.1'/>
<path d='M0.6 0.8 V19.2' stroke='#a9b7ca' stroke-width='1.1'/>
<path d='M22 0.8 V19.2' stroke='#a9b7ca' stroke-width='1.1'/>
<path d='M0 0.9 H9.3 M8.4 0.9 V19.2 M0 19.2 H9.3' stroke='#7d8ca3' stroke-width='1.7' fill='none'/>
<path d='M15 0.9 H22.6 M15.9 0.9 V19.2 M15 19.2 H22.6' stroke='#7d8ca3' stroke-width='1.7' fill='none'/>
<path d='M6.5 14.5 Q8 15.5 9.5 14 Q13 9.5 17.5 6.8' stroke='#3d7f3d' stroke-width='3.6' fill='none' stroke-linecap='round'/>
<path d='M7 14.6 Q8 15 9.5 13.6 Q13 9.4 17.2 7.2' stroke='#74c266' stroke-width='1.3' fill='none' stroke-linecap='round'/>
</svg><svg style='left:516px;top:552px' width='18' height='18' viewBox='0 0 18 18'>
<circle cx='6.5' cy='7' r='5.6' fill='#dbe8f7' stroke='#b5cce6' stroke-width='1.3'/>
<path d='M10.5 12 L14.5 16.5' stroke='#b88650' stroke-width='3.2' stroke-linecap='round'/>
<path d='M12 3.5 V12.5 M7.5 8 H16.5' stroke='#2f7f2f' stroke-width='3.6'/>
<path d='M12 4.5 V11.5 M8.5 8 H15.5' stroke='#58b84a' stroke-width='1.6'/>
</svg><svg style='left:611px;top:552px' width='20' height='21' viewBox='0 0 20 21'>
<path d='M1.2 2 V19' stroke='#888' stroke-width='1' stroke-dasharray='1.2 0.8'/>
<path d='M0.8 1.2 H7.5 M0.8 19.8 H7.5' stroke='#111' stroke-width='2'/>
<path d='M1.8 4.5 H6 M1.8 16.5 H6' stroke='#aaa' stroke-width='1.1'/>
<path d='M0.8 6.2 H5.5' stroke='#222' stroke-width='1.5'/>
<path d='M0.8 14.2 H5.5' stroke='#444' stroke-width='1.3'/>
<path d='M2.2 10.2 L9.5 4.2 L8.7 8.3 L13.5 8.3 L13.5 12.1 L8.7 12.1 L9.5 16.2 Z' fill='#6d6bd9'/>
<path d='M4 10.2 L8.5 6.8 L8 9.2 L12.5 9.2' stroke='#a9a8f0' stroke-width='0.8' fill='none'/>
<path d='M14.3 7.6 H19.4 V13.6 H14.3 Z' fill='#efd27a' stroke='#1a1a1a' stroke-width='1.3'/>
<path d='M17.3 1.2 L18 3 L19.8 3.7 L18 4.4 L17.3 6.2 L16.6 4.4 L14.8 3.7 L16.6 3 Z' fill='#2a2a70'/>
</svg><svg style='left:694px;top:551px' width='22' height='22' viewBox='0 0 22 22'>
<defs><linearGradient id='emg1' x1='0' y1='0' x2='0' y2='1'><stop offset='0' stop-color='#fff'/><stop offset='1' stop-color='#aaa'/></linearGradient></defs>
<rect x='0.8' y='3' width='20' height='9' fill='#7ea6dc' stroke='#3d63a0' stroke-width='1.2'/>
<rect x='4' y='0.8' width='13.5' height='6.5' rx='1' fill='url(#emg1)' stroke='#555' stroke-width='1.2'/>
<path d='M5 12 V20 M8.5 12 V19 M11 12 V20 M14 12 V19 M17 12 V20' stroke='#777' stroke-width='1.4'/>
<circle cx='5' cy='20' r='1.3' fill='#fff' stroke='#888' stroke-width='0.9'/>
<circle cx='11' cy='20.3' r='1.3' fill='#fff' stroke='#888' stroke-width='0.9'/>
<circle cx='17' cy='20' r='1.3' fill='#fff' stroke='#888' stroke-width='0.9'/>
</svg><svg style='left:784px;top:552px' width='19' height='19' viewBox='0 0 19 19'>
<defs><radialGradient id='drg' cx='0.5' cy='0.35' r='0.7'><stop offset='0' stop-color='#ff9c92'/><stop offset='1' stop-color='#e0443a'/></radialGradient></defs>
<circle cx='9.5' cy='9.5' r='8.8' fill='url(#drg)' stroke='#b5433c' stroke-width='1.2'/>
<rect x='5' y='8' width='9' height='3.2' fill='#fff'/>
</svg>
<div class='t lk' style='left:331px;top:549.60px'>Browse</div>
<div class='t lk' style='left:430px;top:549.60px'>Structure</div>
<div class='t lk' style='left:541px;top:549.60px'>Search</div>
<div class='t lk' style='left:637px;top:549.60px'>Insert</div>
<div class='t lk' style='left:720px;top:549.60px'>Empty</div>
<div class='t lk' style='left:809px;top:549.60px'>Drop</div>
<div class='t num' style='left:856px;width:85px;text-align:right;top:552.00px;color:#222'>15</div>
<div class='t' style='left:953px;top:551.00px;color:#222'>InnoDB</div>
<div class='t' style='left:1028px;top:551.00px;color:#222'>utf8mb4_unicode_ci</div>
<div class='t sz' style='left:1209px;top:552.00px'>48.0 KiB</div>
<div class='a' style='left:1366px;top:562px;width:8px;height:2px;background:#444'></div>
<div class='row even' style='top:578.60px;height:32.40px'></div>
<div class='cb' style='left:23px;top:588.60px'></div>
<div class='t b lk' style='left:59px;top:584.60px'>wp_users</div>
<svg style='left:266px;top:585px' width='22' height='22' viewBox='0 0 22 22'>
<defs><linearGradient id='stg' x1='0' y1='0' x2='0' y2='1'><stop offset='0' stop-color='#d0cbbd'/><stop offset='1' stop-color='#aba594'/></linearGradient></defs>
<path d='M11.00,1.80 L14.17,7.63 L20.70,8.85 L16.14,13.67 L17.00,20.25 L11.00,17.40 L5.00,20.25 L5.86,13.67 L1.30,8.85 L7.83,7.63 Z' fill='url(#stg)' stroke='#9a9583' stroke-width='1.8' stroke-linejoin='round'/>
</svg><svg style='left:306px;top:586px' width='19' height='19' viewBox='0 0 19 19'><rect x='0.6' y='0.6' width='17.8' height='17.8' fill='#eef5fd' stroke='#7e9fcb' stroke-width='1.2'/>
<path d='M2.5 3.3H16.5' stroke='#7e9fcb' stroke-width='1.2'/>
<path d='M1 7H18M1 10H18M1 13H18M1 16H18M6.3 5V18M12.5 5V18' stroke='#a6bfdf' stroke-width='0.8'/></svg><svg style='left:403px;top:586px' width='23' height='20' viewBox='0 0 23 20'>
<rect x='0.5' y='0.5' width='8' height='19' fill='#e6f0fb'/>
<rect x='15.5' y='0.5' width='6.5' height='19' fill='#e6f0fb'/>
<path d='M1.5 5h6M1.5 8h6M1.5 11h6M1.5 14h6M1.5 17h6M16.5 5h5M16.5 8h5M16.5 11h5M16.5 14h5M16.5 17h5' stroke='#b9c8da' stroke-width='0.9'/>
<path d='M1.5 3h6M16.5 3h5' stroke='#86b57a' stroke-width='1.1'/>
<path d='M0.6 0.8 V19.2' stroke='#a9b7ca' stroke-width='1.1'/>
<path d='M22 0.8 V19.2' stroke='#a9b7ca' stroke-width='1.1'/>
<path d='M0 0.9 H9.3 M8.4 0.9 V19.2 M0 19.2 H9.3' stroke='#7d8ca3' stroke-width='1.7' fill='none'/>
<path d='M15 0.9 H22.6 M15.9 0.9 V19.2 M15 19.2 H22.6' stroke='#7d8ca3' stroke-width='1.7' fill='none'/>
<path d='M6.5 14.5 Q8 15.5 9.5 14 Q13 9.5 17.5 6.8' stroke='#3d7f3d' stroke-width='3.6' fill='none' stroke-linecap='round'/>
<path d='M7 14.6 Q8 15 9.5 13.6 Q13 9.4 17.2 7.2' stroke='#74c266' stroke-width='1.3' fill='none' stroke-linecap='round'/>
</svg><svg style='left:516px;top:586px' width='18' height='18' viewBox='0 0 18 18'>
<circle cx='6.5' cy='7' r='5.6' fill='#dbe8f7' stroke='#b5cce6' stroke-width='1.3'/>
<path d='M10.5 12 L14.5 16.5' stroke='#b88650' stroke-width='3.2' stroke-linecap='round'/>
<path d='M12 3.5 V12.5 M7.5 8 H16.5' stroke='#2f7f2f' stroke-width='3.6'/>
<path d='M12 4.5 V11.5 M8.5 8 H15.5' stroke='#58b84a' stroke-width='1.6'/>
</svg><svg style='left:611px;top:586px' width='20' height='21' viewBox='0 0 20 21'>
<path d='M1.2 2 V19' stroke='#888' stroke-width='1' stroke-dasharray='1.2 0.8'/>
<path d='M0.8 1.2 H7.5 M0.8 19.8 H7.5' stroke='#111' stroke-width='2'/>
<path d='M1.8 4.5 H6 M1.8 16.5 H6' stroke='#aaa' stroke-width='1.1'/>
<path d='M0.8 6.2 H5.5' stroke='#222' stroke-width='1.5'/>
<path d='M0.8 14.2 H5.5' stroke='#444' stroke-width='1.3'/>
<path d='M2.2 10.2 L9.5 4.2 L8.7 8.3 L13.5 8.3 L13.5 12.1 L8.7 12.1 L9.5 16.2 Z' fill='#6d6bd9'/>
<path d='M4 10.2 L8.5 6.8 L8 9.2 L12.5 9.2' stroke='#a9a8f0' stroke-width='0.8' fill='none'/>
<path d='M14.3 7.6 H19.4 V13.6 H14.3 Z' fill='#efd27a' stroke='#1a1a1a' stroke-width='1.3'/>
<path d='M17.3 1.2 L18 3 L19.8 3.7 L18 4.4 L17.3 6.2 L16.6 4.4 L14.8 3.7 L16.6 3 Z' fill='#2a2a70'/>
</svg><svg style='left:694px;top:585px' width='22' height='22' viewBox='0 0 22 22'>
<defs><linearGradient id='emg1' x1='0' y1='0' x2='0' y2='1'><stop offset='0' stop-color='#fff'/><stop offset='1' stop-color='#aaa'/></linearGradient></defs>
<rect x='0.8' y='3' width='20' height='9' fill='#7ea6dc' stroke='#3d63a0' stroke-width='1.2'/>
<rect x='4' y='0.8' width='13.5' height='6.5' rx='1' fill='url(#emg1)' stroke='#555' stroke-width='1.2'/>
<path d='M5 12 V20 M8.5 12 V19 M11 12 V20 M14 12 V19 M17 12 V20' stroke='#777' stroke-width='1.4'/>
<circle cx='5' cy='20' r='1.3' fill='#fff' stroke='#888' stroke-width='0.9'/>
<circle cx='11' cy='20.3' r='1.3' fill='#fff' stroke='#888' stroke-width='0.9'/>
<circle cx='17' cy='20' r='1.3' fill='#fff' stroke='#888' stroke-width='0.9'/>
</svg><svg style='left:784px;top:586px' width='19' height='19' viewBox='0 0 19 19'>
<defs><radialGradient id='drg' cx='0.5' cy='0.35' r='0.7'><stop offset='0' stop-color='#ff9c92'/><stop offset='1' stop-color='#e0443a'/></radialGradient></defs>
<circle cx='9.5' cy='9.5' r='8.8' fill='url(#drg)' stroke='#b5433c' stroke-width='1.2'/>
<rect x='5' y='8' width='9' height='3.2' fill='#fff'/>
</svg>
<div class='t lk' style='left:331px;top:583.20px'>Browse</div>
<div class='t lk' style='left:430px;top:583.20px'>Structure</div>
<div class='t lk' style='left:541px;top:583.20px'>Search</div>
<div class='t lk' style='left:637px;top:583.20px'>Insert</div>
<div class='t lk' style='left:720px;top:583.20px'>Empty</div>
<div class='t lk' style='left:809px;top:583.20px'>Drop</div>
<div class='t num' style='left:856px;width:85px;text-align:right;top:585.60px;color:#222'>1</div>
<div class='t' style='left:953px;top:584.60px;color:#222'>InnoDB</div>
<div class='t' style='left:1028px;top:584.60px;color:#222'>utf8mb4_unicode_ci</div>
<div class='t sz' style='left:1209px;top:585.60px'>64.0 KiB</div>
<div class='a' style='left:1366px;top:596px;width:8px;height:2px;background:#444'></div>
<div class='a' style='left:10px;top:611px;width:1369px;height:23.5px;background:linear-gradient(#fff 5%,#cfcfcf)'></div>
<div class='t b' style='left:59px;top:613px;text-shadow:0 1px 0 #fff'>12 tables</div>
<div class='t b' style='left:265px;top:613px;text-shadow:0 1px 0 #fff'>Sum</div>
<div class='t num b' style='left:856px;width:85px;text-align:right;top:614px'>146</div>
<div class='t b' style='left:953px;top:613px'>InnoDB</div>
<div class='t b' style='left:1028px;top:613px'>latin1_swedish_ci</div>
<div class='t sz b' style='left:1200px;top:614px;color:#000'>672.0 KiB</div>
<div class='t num b' style='left:1300px;width:74px;text-align:right;top:614px'>0 B</div>
<svg style='left:25px;top:654px' width='40' height='23' viewBox='0 0 40 23'><path d='M7.2 7 V21 H39' stroke='#333' stroke-width='1.7' fill='none'/><path d='M0.8 7.9 L7.2 1 L13.6 7.9 Z' fill='#111'/></svg>
<div class='cb' style='left:90px;top:661px;width:17px;height:16px'></div>
<div class='t lk' style='left:120px;top:655px'>Check all</div>
<div class='a' style='left:254px;top:651px;width:235px;height:29px;background:#fff;border:1px solid #aaa;border-radius:5px'></div>
<div class='t' style='left:267px;top:655px;color:#222;letter-spacing:0.38px'>With selected:</div>
<svg style='left:474px;top:657px' width='9' height='17'><path d='M0.5 7 L4.5 0.5 L8.5 7 Z M0.5 10 L4.5 16.5 L8.5 10 Z' fill='#333'/></svg>
<div class='a' style='left:9px;top:692px;width:1491px;height:2px;background:#777'></div>
<svg style='left:14px;top:711px' width='22' height='21' viewBox='0 0 22 21'>
<path d='M5 1 H13 L16 4 V9 H5 Z' fill='#dfe9f6' stroke='#8ba6c9' stroke-width='1.1'/>
<rect x='0.8' y='8' width='20.5' height='9.5' rx='2.5' fill='#c8c8c8' stroke='#858585' stroke-width='1.2'/>
<rect x='4.5' y='15' width='13' height='5.5' fill='#e8eef6' stroke='#8ba6c9' stroke-width='1.1'/>
</svg><svg style='left:89px;top:711px' width='22' height='20' viewBox='0 0 22 20'>
<rect x='3' y='1' width='18' height='12' fill='#9a9a9a' stroke='#6a6a6a' stroke-width='1'/>
<path d='M3 5H21M3 9H21M9 1V13M15 1V13' stroke='#d6d6d6' stroke-width='0.8'/>
<rect x='0.8' y='11' width='6' height='8.5' fill='#fff' stroke='#111' stroke-width='1.4'/>
<rect x='15' y='10' width='6.2' height='8.5' fill='#fff' stroke='#111' stroke-width='1.4'/>
<path d='M7 15 L15 14' stroke='#222' stroke-width='1.3'/>
<path d='M3.8 13.5V17.5M18 12.5V16.5' stroke='#555' stroke-width='1'/>
</svg>
<div class='t lk' style='left:41px;top:711px'>Print</div>
<div class='t lk' style='left:116px;top:711px'>Data dictionary</div>
<div class='a' style='left:12px;top:771px;width:1500px;height:91px;background:#eee;border:1px solid #aaa;border-right:none;border-bottom:none;border-radius:4px 0 0 0'></div>
<div class='a' style='left:12px;top:861px;width:1500px;height:69px;background:#d3dae2;border:1px solid #aaa;border-right:none;border-radius:0 0 0 8px'></div>
<div class='a' style='left:22px;top:751px;width:166px;height:40px;background:#fff;border:1px solid #aaa;border-radius:2px;box-shadow:3px 3px 15px #bbb'></div>
<div class='t b' style='left:70px;top:759px;color:#222'>Create table</div>
<svg style='left:43px;top:762px' width='21' height='21' viewBox='0 0 21 21'><rect x='0.6' y='0.6' width='16.8' height='17.8' fill='#e3eefb' stroke='#8796ad' stroke-width='1.2'/>
<path d='M2.5 3.3H15.5' stroke='#8fb48a' stroke-width='1.2'/>
<path d='M1 7H17M1 10H17M1 13H17M1 16H17M5.9 5V18M11.9 5V18' stroke='#b7c6d8' stroke-width='0.8'/>
<circle cx='16' cy='16' r='4.6' fill='#5fb84f' stroke='#2f7f2f' stroke-width='1'/>
<path d='M16 13.3V18.7M13.3 16H18.7' stroke='#fff' stroke-width='1.5'/>
</svg>
<div class='t' style='left:22px;top:817px;color:#222'>Name:</div>
<div class='a' style='left:88px;top:808px;width:310px;height:35px;background:#fff;border:1px solid #aaa;border-radius:2px'></div>
<div class='t' style='left:416px;top:817px;color:#222'>Number of columns:</div>
<div class='a' style='left:590px;top:808px;width:82px;height:35px;background:#fff;border:1px solid #aaa;border-radius:2px'></div>
<div class='t' style='left:597px;top:817px;color:#222'>4</div>
<div class='a' style='left:19px;top:948px;width:1481px;height:2px;background:#ccc'></div>
</body></html>
